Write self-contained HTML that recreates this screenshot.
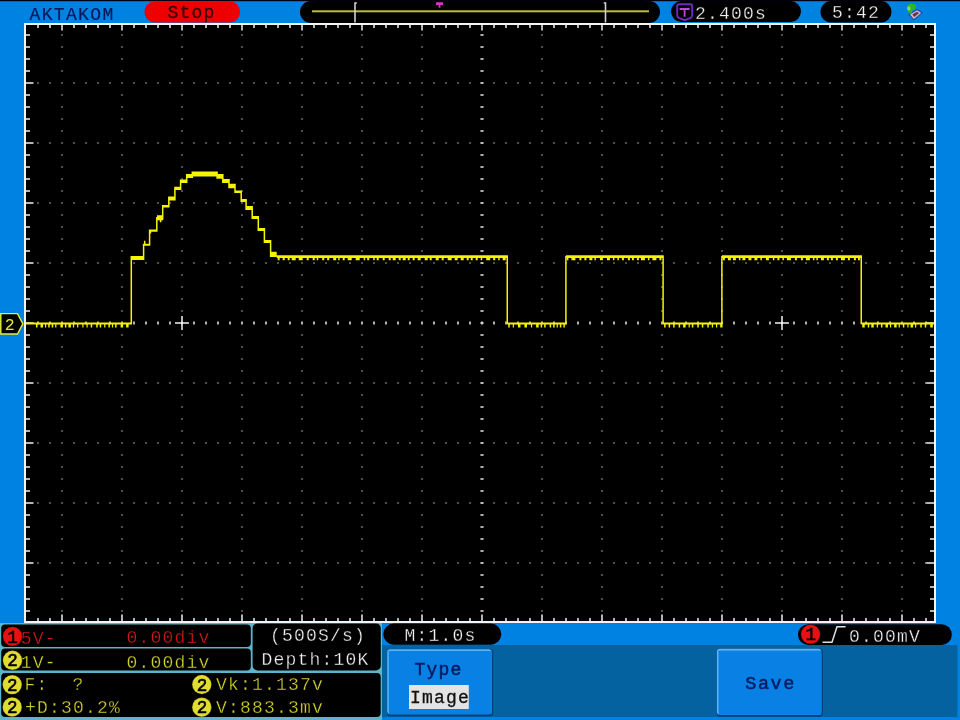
<!DOCTYPE html>
<html><head><meta charset="utf-8"><style>
html,body{margin:0;padding:0;background:#0082e2;width:960px;height:720px;overflow:hidden}
svg{display:block;filter:blur(0.35px)}
text{font-family:"Liberation Mono",monospace;}
</style></head><body>
<svg width="960" height="720" viewBox="0 0 960 720">
<rect x="0" y="0" width="960" height="720" fill="#0082e2"/>
<rect x="0" y="0" width="960" height="1.2" fill="#000010"/>

<text x="29.5" y="19.6" font-size="18" letter-spacing="1.35" fill="#061a5a" font-weight="normal" xml:space="preserve" stroke="#061a5a" stroke-width="0.2">AKTAKOM</text>
<rect x="144.5" y="1.2" width="95.5" height="21.3" rx="10.6" fill="#ee0000"/>
<text x="167.5" y="17.8" font-size="18" letter-spacing="1.20" fill="#300000" font-weight="normal" xml:space="preserve" stroke="#300000" stroke-width="0.3">Stop</text>
<rect x="300" y="1" width="360" height="22" rx="11" fill="#000"/>
<rect x="312" y="10.3" width="337" height="2" fill="#bcbc36"/>
<path d="M355 22.5V3h1.8" stroke="#cfcfd8" stroke-width="1.6" fill="none"/>
<path d="M605.5 22.5V3h-1.8" stroke="#cfcfd8" stroke-width="1.6" fill="none"/>
<path d="M436 2.3h7v2.6h-2.6v2.8h-1.8v-2.8h-2.6z" fill="#dd30d0"/>
<rect x="671" y="1.1" width="130" height="20.9" rx="10.4" fill="#000"/>
<path d="M677.2 6.2Q677.2 4.2 679.2 4.2H690.2Q692.2 4.2 692.2 6.2V15.5Q692.2 17 690.7 17.8L685.6 19.8Q684.7 20.2 683.8 19.8L678.7 17.8Q677.2 17 677.2 15.5Z" fill="none" stroke="#6e2ac4" stroke-width="1.9"/>
<path d="M679.6 8h10v2h-4.1v6.8h-1.8v-6.8h-4.1z" fill="#c043e2"/>
<text x="695" y="18.8" font-size="18" letter-spacing="1.20" fill="#f2f2f2" font-weight="normal" xml:space="preserve"  stroke="#000" stroke-width="0.3">2.400s</text>
<rect x="820.5" y="1.1" width="71" height="21.4" rx="10.6" fill="#000"/>
<text x="832" y="17.9" font-size="18" letter-spacing="1.20" fill="#f2f2f2" font-weight="normal" xml:space="preserve"  stroke="#000" stroke-width="0.3">5:42</text>
<path d="M908.4 14.6L917.2 9L922.8 12.8L913.6 20.4z" fill="#1c46aa"/>
<path d="M910 14.6L917.1 10.2L921.2 13L913.8 19z" fill="#dcb4c8"/>
<path d="M912.3 14.6L916.9 11.8L919 13.2L914.2 17z" fill="#5a3852"/>
<path d="M906.8 8C906.8 5 909 3.6 912 3.8C915 4 916.8 5.4 916.2 7.6C915.6 9.4 913.4 9.8 912 11L911.4 14L910 13.6C908 12 906.8 10 906.8 8z" fill="#2fb52a"/>
<ellipse cx="908.9" cy="8.4" rx="1.6" ry="2.2" fill="#78e068"/>
<rect x="24" y="23" width="912" height="600" fill="#f4f4f4"/>
<rect x="26" y="25" width="908" height="596" fill="#000"/>
<path d="M37.25 25h1.5v3h-1.5zM37.25 621h1.5v-3h-1.5zM49.25 25h1.5v3h-1.5zM49.25 621h1.5v-3h-1.5zM61.25 25h1.5v5.5h-1.5zM61.25 621h1.5v-6.5h-1.5zM73.25 25h1.5v3h-1.5zM73.25 621h1.5v-3h-1.5zM85.25 25h1.5v3h-1.5zM85.25 621h1.5v-3h-1.5zM97.25 25h1.5v3h-1.5zM97.25 621h1.5v-3h-1.5zM109.25 25h1.5v3h-1.5zM109.25 621h1.5v-3h-1.5zM121.25 25h1.5v5.5h-1.5zM121.25 621h1.5v-6.5h-1.5zM133.25 25h1.5v3h-1.5zM133.25 621h1.5v-3h-1.5zM145.25 25h1.5v3h-1.5zM145.25 621h1.5v-3h-1.5zM157.25 25h1.5v3h-1.5zM157.25 621h1.5v-3h-1.5zM169.25 25h1.5v3h-1.5zM169.25 621h1.5v-3h-1.5zM181.25 25h1.5v5.5h-1.5zM181.25 621h1.5v-6.5h-1.5zM193.25 25h1.5v3h-1.5zM193.25 621h1.5v-3h-1.5zM205.25 25h1.5v3h-1.5zM205.25 621h1.5v-3h-1.5zM217.25 25h1.5v3h-1.5zM217.25 621h1.5v-3h-1.5zM229.25 25h1.5v3h-1.5zM229.25 621h1.5v-3h-1.5zM241.25 25h1.5v5.5h-1.5zM241.25 621h1.5v-6.5h-1.5zM253.25 25h1.5v3h-1.5zM253.25 621h1.5v-3h-1.5zM265.25 25h1.5v3h-1.5zM265.25 621h1.5v-3h-1.5zM277.25 25h1.5v3h-1.5zM277.25 621h1.5v-3h-1.5zM289.25 25h1.5v3h-1.5zM289.25 621h1.5v-3h-1.5zM301.25 25h1.5v5.5h-1.5zM301.25 621h1.5v-6.5h-1.5zM313.25 25h1.5v3h-1.5zM313.25 621h1.5v-3h-1.5zM325.25 25h1.5v3h-1.5zM325.25 621h1.5v-3h-1.5zM337.25 25h1.5v3h-1.5zM337.25 621h1.5v-3h-1.5zM349.25 25h1.5v3h-1.5zM349.25 621h1.5v-3h-1.5zM361.25 25h1.5v5.5h-1.5zM361.25 621h1.5v-6.5h-1.5zM373.25 25h1.5v3h-1.5zM373.25 621h1.5v-3h-1.5zM385.25 25h1.5v3h-1.5zM385.25 621h1.5v-3h-1.5zM397.25 25h1.5v3h-1.5zM397.25 621h1.5v-3h-1.5zM409.25 25h1.5v3h-1.5zM409.25 621h1.5v-3h-1.5zM421.25 25h1.5v5.5h-1.5zM421.25 621h1.5v-6.5h-1.5zM433.25 25h1.5v3h-1.5zM433.25 621h1.5v-3h-1.5zM445.25 25h1.5v3h-1.5zM445.25 621h1.5v-3h-1.5zM457.25 25h1.5v3h-1.5zM457.25 621h1.5v-3h-1.5zM469.25 25h1.5v3h-1.5zM469.25 621h1.5v-3h-1.5zM481.25 25h1.5v5.5h-1.5zM481.25 621h1.5v-6.5h-1.5zM493.25 25h1.5v3h-1.5zM493.25 621h1.5v-3h-1.5zM505.25 25h1.5v3h-1.5zM505.25 621h1.5v-3h-1.5zM517.25 25h1.5v3h-1.5zM517.25 621h1.5v-3h-1.5zM529.25 25h1.5v3h-1.5zM529.25 621h1.5v-3h-1.5zM541.25 25h1.5v5.5h-1.5zM541.25 621h1.5v-6.5h-1.5zM553.25 25h1.5v3h-1.5zM553.25 621h1.5v-3h-1.5zM565.25 25h1.5v3h-1.5zM565.25 621h1.5v-3h-1.5zM577.25 25h1.5v3h-1.5zM577.25 621h1.5v-3h-1.5zM589.25 25h1.5v3h-1.5zM589.25 621h1.5v-3h-1.5zM601.25 25h1.5v5.5h-1.5zM601.25 621h1.5v-6.5h-1.5zM613.25 25h1.5v3h-1.5zM613.25 621h1.5v-3h-1.5zM625.25 25h1.5v3h-1.5zM625.25 621h1.5v-3h-1.5zM637.25 25h1.5v3h-1.5zM637.25 621h1.5v-3h-1.5zM649.25 25h1.5v3h-1.5zM649.25 621h1.5v-3h-1.5zM661.25 25h1.5v5.5h-1.5zM661.25 621h1.5v-6.5h-1.5zM673.25 25h1.5v3h-1.5zM673.25 621h1.5v-3h-1.5zM685.25 25h1.5v3h-1.5zM685.25 621h1.5v-3h-1.5zM697.25 25h1.5v3h-1.5zM697.25 621h1.5v-3h-1.5zM709.25 25h1.5v3h-1.5zM709.25 621h1.5v-3h-1.5zM721.25 25h1.5v5.5h-1.5zM721.25 621h1.5v-6.5h-1.5zM733.25 25h1.5v3h-1.5zM733.25 621h1.5v-3h-1.5zM745.25 25h1.5v3h-1.5zM745.25 621h1.5v-3h-1.5zM757.25 25h1.5v3h-1.5zM757.25 621h1.5v-3h-1.5zM769.25 25h1.5v3h-1.5zM769.25 621h1.5v-3h-1.5zM781.25 25h1.5v5.5h-1.5zM781.25 621h1.5v-6.5h-1.5zM793.25 25h1.5v3h-1.5zM793.25 621h1.5v-3h-1.5zM805.25 25h1.5v3h-1.5zM805.25 621h1.5v-3h-1.5zM817.25 25h1.5v3h-1.5zM817.25 621h1.5v-3h-1.5zM829.25 25h1.5v3h-1.5zM829.25 621h1.5v-3h-1.5zM841.25 25h1.5v5.5h-1.5zM841.25 621h1.5v-6.5h-1.5zM853.25 25h1.5v3h-1.5zM853.25 621h1.5v-3h-1.5zM865.25 25h1.5v3h-1.5zM865.25 621h1.5v-3h-1.5zM877.25 25h1.5v3h-1.5zM877.25 621h1.5v-3h-1.5zM889.25 25h1.5v3h-1.5zM889.25 621h1.5v-3h-1.5zM901.25 25h1.5v5.5h-1.5zM901.25 621h1.5v-6.5h-1.5zM913.25 25h1.5v3h-1.5zM913.25 621h1.5v-3h-1.5zM925.25 25h1.5v3h-1.5zM925.25 621h1.5v-3h-1.5zM26 34.25v1.5h4v-1.5zM934 34.25v1.5h-4v-1.5zM26 46.25v1.5h4v-1.5zM934 46.25v1.5h-4v-1.5zM26 58.25v1.5h4v-1.5zM934 58.25v1.5h-4v-1.5zM26 70.25v1.5h4v-1.5zM934 70.25v1.5h-4v-1.5zM26 82.25v1.5h7.5v-1.5zM934 82.25v1.5h-8.5v-1.5zM26 94.25v1.5h4v-1.5zM934 94.25v1.5h-4v-1.5zM26 106.25v1.5h4v-1.5zM934 106.25v1.5h-4v-1.5zM26 118.25v1.5h4v-1.5zM934 118.25v1.5h-4v-1.5zM26 130.25v1.5h4v-1.5zM934 130.25v1.5h-4v-1.5zM26 142.25v1.5h7.5v-1.5zM934 142.25v1.5h-8.5v-1.5zM26 154.25v1.5h4v-1.5zM934 154.25v1.5h-4v-1.5zM26 166.25v1.5h4v-1.5zM934 166.25v1.5h-4v-1.5zM26 178.25v1.5h4v-1.5zM934 178.25v1.5h-4v-1.5zM26 190.25v1.5h4v-1.5zM934 190.25v1.5h-4v-1.5zM26 202.25v1.5h7.5v-1.5zM934 202.25v1.5h-8.5v-1.5zM26 214.25v1.5h4v-1.5zM934 214.25v1.5h-4v-1.5zM26 226.25v1.5h4v-1.5zM934 226.25v1.5h-4v-1.5zM26 238.25v1.5h4v-1.5zM934 238.25v1.5h-4v-1.5zM26 250.25v1.5h4v-1.5zM934 250.25v1.5h-4v-1.5zM26 262.25v1.5h7.5v-1.5zM934 262.25v1.5h-8.5v-1.5zM26 274.25v1.5h4v-1.5zM934 274.25v1.5h-4v-1.5zM26 286.25v1.5h4v-1.5zM934 286.25v1.5h-4v-1.5zM26 298.25v1.5h4v-1.5zM934 298.25v1.5h-4v-1.5zM26 310.25v1.5h4v-1.5zM934 310.25v1.5h-4v-1.5zM26 322.25v1.5h7.5v-1.5zM934 322.25v1.5h-8.5v-1.5zM26 334.25v1.5h4v-1.5zM934 334.25v1.5h-4v-1.5zM26 346.25v1.5h4v-1.5zM934 346.25v1.5h-4v-1.5zM26 358.25v1.5h4v-1.5zM934 358.25v1.5h-4v-1.5zM26 370.25v1.5h4v-1.5zM934 370.25v1.5h-4v-1.5zM26 382.25v1.5h7.5v-1.5zM934 382.25v1.5h-8.5v-1.5zM26 394.25v1.5h4v-1.5zM934 394.25v1.5h-4v-1.5zM26 406.25v1.5h4v-1.5zM934 406.25v1.5h-4v-1.5zM26 418.25v1.5h4v-1.5zM934 418.25v1.5h-4v-1.5zM26 430.25v1.5h4v-1.5zM934 430.25v1.5h-4v-1.5zM26 442.25v1.5h7.5v-1.5zM934 442.25v1.5h-8.5v-1.5zM26 454.25v1.5h4v-1.5zM934 454.25v1.5h-4v-1.5zM26 466.25v1.5h4v-1.5zM934 466.25v1.5h-4v-1.5zM26 478.25v1.5h4v-1.5zM934 478.25v1.5h-4v-1.5zM26 490.25v1.5h4v-1.5zM934 490.25v1.5h-4v-1.5zM26 502.25v1.5h7.5v-1.5zM934 502.25v1.5h-8.5v-1.5zM26 514.25v1.5h4v-1.5zM934 514.25v1.5h-4v-1.5zM26 526.25v1.5h4v-1.5zM934 526.25v1.5h-4v-1.5zM26 538.25v1.5h4v-1.5zM934 538.25v1.5h-4v-1.5zM26 550.25v1.5h4v-1.5zM934 550.25v1.5h-4v-1.5zM26 562.25v1.5h7.5v-1.5zM934 562.25v1.5h-8.5v-1.5zM26 574.25v1.5h4v-1.5zM934 574.25v1.5h-4v-1.5zM26 586.25v1.5h4v-1.5zM934 586.25v1.5h-4v-1.5zM26 598.25v1.5h4v-1.5zM934 598.25v1.5h-4v-1.5zM26 610.25v1.5h4v-1.5zM934 610.25v1.5h-4v-1.5z" fill="#f0f0f0"/>
<path d="M61.25 34.25h1.5v1.5h-1.5zM61.25 46.25h1.5v1.5h-1.5zM61.25 58.25h1.5v1.5h-1.5zM61.25 70.25h1.5v1.5h-1.5zM61.25 94.25h1.5v1.5h-1.5zM61.25 106.25h1.5v1.5h-1.5zM61.25 118.25h1.5v1.5h-1.5zM61.25 130.25h1.5v1.5h-1.5zM61.25 154.25h1.5v1.5h-1.5zM61.25 166.25h1.5v1.5h-1.5zM61.25 178.25h1.5v1.5h-1.5zM61.25 190.25h1.5v1.5h-1.5zM61.25 214.25h1.5v1.5h-1.5zM61.25 226.25h1.5v1.5h-1.5zM61.25 238.25h1.5v1.5h-1.5zM61.25 250.25h1.5v1.5h-1.5zM61.25 274.25h1.5v1.5h-1.5zM61.25 286.25h1.5v1.5h-1.5zM61.25 298.25h1.5v1.5h-1.5zM61.25 310.25h1.5v1.5h-1.5zM61.25 334.25h1.5v1.5h-1.5zM61.25 346.25h1.5v1.5h-1.5zM61.25 358.25h1.5v1.5h-1.5zM61.25 370.25h1.5v1.5h-1.5zM61.25 394.25h1.5v1.5h-1.5zM61.25 406.25h1.5v1.5h-1.5zM61.25 418.25h1.5v1.5h-1.5zM61.25 430.25h1.5v1.5h-1.5zM61.25 454.25h1.5v1.5h-1.5zM61.25 466.25h1.5v1.5h-1.5zM61.25 478.25h1.5v1.5h-1.5zM61.25 490.25h1.5v1.5h-1.5zM61.25 514.25h1.5v1.5h-1.5zM61.25 526.25h1.5v1.5h-1.5zM61.25 538.25h1.5v1.5h-1.5zM61.25 550.25h1.5v1.5h-1.5zM61.25 574.25h1.5v1.5h-1.5zM61.25 586.25h1.5v1.5h-1.5zM61.25 598.25h1.5v1.5h-1.5zM61.25 610.25h1.5v1.5h-1.5zM121.25 34.25h1.5v1.5h-1.5zM121.25 46.25h1.5v1.5h-1.5zM121.25 58.25h1.5v1.5h-1.5zM121.25 70.25h1.5v1.5h-1.5zM121.25 94.25h1.5v1.5h-1.5zM121.25 106.25h1.5v1.5h-1.5zM121.25 118.25h1.5v1.5h-1.5zM121.25 130.25h1.5v1.5h-1.5zM121.25 154.25h1.5v1.5h-1.5zM121.25 166.25h1.5v1.5h-1.5zM121.25 178.25h1.5v1.5h-1.5zM121.25 190.25h1.5v1.5h-1.5zM121.25 214.25h1.5v1.5h-1.5zM121.25 226.25h1.5v1.5h-1.5zM121.25 238.25h1.5v1.5h-1.5zM121.25 250.25h1.5v1.5h-1.5zM121.25 274.25h1.5v1.5h-1.5zM121.25 286.25h1.5v1.5h-1.5zM121.25 298.25h1.5v1.5h-1.5zM121.25 310.25h1.5v1.5h-1.5zM121.25 334.25h1.5v1.5h-1.5zM121.25 346.25h1.5v1.5h-1.5zM121.25 358.25h1.5v1.5h-1.5zM121.25 370.25h1.5v1.5h-1.5zM121.25 394.25h1.5v1.5h-1.5zM121.25 406.25h1.5v1.5h-1.5zM121.25 418.25h1.5v1.5h-1.5zM121.25 430.25h1.5v1.5h-1.5zM121.25 454.25h1.5v1.5h-1.5zM121.25 466.25h1.5v1.5h-1.5zM121.25 478.25h1.5v1.5h-1.5zM121.25 490.25h1.5v1.5h-1.5zM121.25 514.25h1.5v1.5h-1.5zM121.25 526.25h1.5v1.5h-1.5zM121.25 538.25h1.5v1.5h-1.5zM121.25 550.25h1.5v1.5h-1.5zM121.25 574.25h1.5v1.5h-1.5zM121.25 586.25h1.5v1.5h-1.5zM121.25 598.25h1.5v1.5h-1.5zM121.25 610.25h1.5v1.5h-1.5zM181.25 34.25h1.5v1.5h-1.5zM181.25 46.25h1.5v1.5h-1.5zM181.25 58.25h1.5v1.5h-1.5zM181.25 70.25h1.5v1.5h-1.5zM181.25 94.25h1.5v1.5h-1.5zM181.25 106.25h1.5v1.5h-1.5zM181.25 118.25h1.5v1.5h-1.5zM181.25 130.25h1.5v1.5h-1.5zM181.25 154.25h1.5v1.5h-1.5zM181.25 166.25h1.5v1.5h-1.5zM181.25 178.25h1.5v1.5h-1.5zM181.25 190.25h1.5v1.5h-1.5zM181.25 214.25h1.5v1.5h-1.5zM181.25 226.25h1.5v1.5h-1.5zM181.25 238.25h1.5v1.5h-1.5zM181.25 250.25h1.5v1.5h-1.5zM181.25 274.25h1.5v1.5h-1.5zM181.25 286.25h1.5v1.5h-1.5zM181.25 298.25h1.5v1.5h-1.5zM181.25 310.25h1.5v1.5h-1.5zM181.25 334.25h1.5v1.5h-1.5zM181.25 346.25h1.5v1.5h-1.5zM181.25 358.25h1.5v1.5h-1.5zM181.25 370.25h1.5v1.5h-1.5zM181.25 394.25h1.5v1.5h-1.5zM181.25 406.25h1.5v1.5h-1.5zM181.25 418.25h1.5v1.5h-1.5zM181.25 430.25h1.5v1.5h-1.5zM181.25 454.25h1.5v1.5h-1.5zM181.25 466.25h1.5v1.5h-1.5zM181.25 478.25h1.5v1.5h-1.5zM181.25 490.25h1.5v1.5h-1.5zM181.25 514.25h1.5v1.5h-1.5zM181.25 526.25h1.5v1.5h-1.5zM181.25 538.25h1.5v1.5h-1.5zM181.25 550.25h1.5v1.5h-1.5zM181.25 574.25h1.5v1.5h-1.5zM181.25 586.25h1.5v1.5h-1.5zM181.25 598.25h1.5v1.5h-1.5zM181.25 610.25h1.5v1.5h-1.5zM241.25 34.25h1.5v1.5h-1.5zM241.25 46.25h1.5v1.5h-1.5zM241.25 58.25h1.5v1.5h-1.5zM241.25 70.25h1.5v1.5h-1.5zM241.25 94.25h1.5v1.5h-1.5zM241.25 106.25h1.5v1.5h-1.5zM241.25 118.25h1.5v1.5h-1.5zM241.25 130.25h1.5v1.5h-1.5zM241.25 154.25h1.5v1.5h-1.5zM241.25 166.25h1.5v1.5h-1.5zM241.25 178.25h1.5v1.5h-1.5zM241.25 190.25h1.5v1.5h-1.5zM241.25 214.25h1.5v1.5h-1.5zM241.25 226.25h1.5v1.5h-1.5zM241.25 238.25h1.5v1.5h-1.5zM241.25 250.25h1.5v1.5h-1.5zM241.25 274.25h1.5v1.5h-1.5zM241.25 286.25h1.5v1.5h-1.5zM241.25 298.25h1.5v1.5h-1.5zM241.25 310.25h1.5v1.5h-1.5zM241.25 334.25h1.5v1.5h-1.5zM241.25 346.25h1.5v1.5h-1.5zM241.25 358.25h1.5v1.5h-1.5zM241.25 370.25h1.5v1.5h-1.5zM241.25 394.25h1.5v1.5h-1.5zM241.25 406.25h1.5v1.5h-1.5zM241.25 418.25h1.5v1.5h-1.5zM241.25 430.25h1.5v1.5h-1.5zM241.25 454.25h1.5v1.5h-1.5zM241.25 466.25h1.5v1.5h-1.5zM241.25 478.25h1.5v1.5h-1.5zM241.25 490.25h1.5v1.5h-1.5zM241.25 514.25h1.5v1.5h-1.5zM241.25 526.25h1.5v1.5h-1.5zM241.25 538.25h1.5v1.5h-1.5zM241.25 550.25h1.5v1.5h-1.5zM241.25 574.25h1.5v1.5h-1.5zM241.25 586.25h1.5v1.5h-1.5zM241.25 598.25h1.5v1.5h-1.5zM241.25 610.25h1.5v1.5h-1.5zM301.25 34.25h1.5v1.5h-1.5zM301.25 46.25h1.5v1.5h-1.5zM301.25 58.25h1.5v1.5h-1.5zM301.25 70.25h1.5v1.5h-1.5zM301.25 94.25h1.5v1.5h-1.5zM301.25 106.25h1.5v1.5h-1.5zM301.25 118.25h1.5v1.5h-1.5zM301.25 130.25h1.5v1.5h-1.5zM301.25 154.25h1.5v1.5h-1.5zM301.25 166.25h1.5v1.5h-1.5zM301.25 178.25h1.5v1.5h-1.5zM301.25 190.25h1.5v1.5h-1.5zM301.25 214.25h1.5v1.5h-1.5zM301.25 226.25h1.5v1.5h-1.5zM301.25 238.25h1.5v1.5h-1.5zM301.25 250.25h1.5v1.5h-1.5zM301.25 274.25h1.5v1.5h-1.5zM301.25 286.25h1.5v1.5h-1.5zM301.25 298.25h1.5v1.5h-1.5zM301.25 310.25h1.5v1.5h-1.5zM301.25 334.25h1.5v1.5h-1.5zM301.25 346.25h1.5v1.5h-1.5zM301.25 358.25h1.5v1.5h-1.5zM301.25 370.25h1.5v1.5h-1.5zM301.25 394.25h1.5v1.5h-1.5zM301.25 406.25h1.5v1.5h-1.5zM301.25 418.25h1.5v1.5h-1.5zM301.25 430.25h1.5v1.5h-1.5zM301.25 454.25h1.5v1.5h-1.5zM301.25 466.25h1.5v1.5h-1.5zM301.25 478.25h1.5v1.5h-1.5zM301.25 490.25h1.5v1.5h-1.5zM301.25 514.25h1.5v1.5h-1.5zM301.25 526.25h1.5v1.5h-1.5zM301.25 538.25h1.5v1.5h-1.5zM301.25 550.25h1.5v1.5h-1.5zM301.25 574.25h1.5v1.5h-1.5zM301.25 586.25h1.5v1.5h-1.5zM301.25 598.25h1.5v1.5h-1.5zM301.25 610.25h1.5v1.5h-1.5zM361.25 34.25h1.5v1.5h-1.5zM361.25 46.25h1.5v1.5h-1.5zM361.25 58.25h1.5v1.5h-1.5zM361.25 70.25h1.5v1.5h-1.5zM361.25 94.25h1.5v1.5h-1.5zM361.25 106.25h1.5v1.5h-1.5zM361.25 118.25h1.5v1.5h-1.5zM361.25 130.25h1.5v1.5h-1.5zM361.25 154.25h1.5v1.5h-1.5zM361.25 166.25h1.5v1.5h-1.5zM361.25 178.25h1.5v1.5h-1.5zM361.25 190.25h1.5v1.5h-1.5zM361.25 214.25h1.5v1.5h-1.5zM361.25 226.25h1.5v1.5h-1.5zM361.25 238.25h1.5v1.5h-1.5zM361.25 250.25h1.5v1.5h-1.5zM361.25 274.25h1.5v1.5h-1.5zM361.25 286.25h1.5v1.5h-1.5zM361.25 298.25h1.5v1.5h-1.5zM361.25 310.25h1.5v1.5h-1.5zM361.25 334.25h1.5v1.5h-1.5zM361.25 346.25h1.5v1.5h-1.5zM361.25 358.25h1.5v1.5h-1.5zM361.25 370.25h1.5v1.5h-1.5zM361.25 394.25h1.5v1.5h-1.5zM361.25 406.25h1.5v1.5h-1.5zM361.25 418.25h1.5v1.5h-1.5zM361.25 430.25h1.5v1.5h-1.5zM361.25 454.25h1.5v1.5h-1.5zM361.25 466.25h1.5v1.5h-1.5zM361.25 478.25h1.5v1.5h-1.5zM361.25 490.25h1.5v1.5h-1.5zM361.25 514.25h1.5v1.5h-1.5zM361.25 526.25h1.5v1.5h-1.5zM361.25 538.25h1.5v1.5h-1.5zM361.25 550.25h1.5v1.5h-1.5zM361.25 574.25h1.5v1.5h-1.5zM361.25 586.25h1.5v1.5h-1.5zM361.25 598.25h1.5v1.5h-1.5zM361.25 610.25h1.5v1.5h-1.5zM421.25 34.25h1.5v1.5h-1.5zM421.25 46.25h1.5v1.5h-1.5zM421.25 58.25h1.5v1.5h-1.5zM421.25 70.25h1.5v1.5h-1.5zM421.25 94.25h1.5v1.5h-1.5zM421.25 106.25h1.5v1.5h-1.5zM421.25 118.25h1.5v1.5h-1.5zM421.25 130.25h1.5v1.5h-1.5zM421.25 154.25h1.5v1.5h-1.5zM421.25 166.25h1.5v1.5h-1.5zM421.25 178.25h1.5v1.5h-1.5zM421.25 190.25h1.5v1.5h-1.5zM421.25 214.25h1.5v1.5h-1.5zM421.25 226.25h1.5v1.5h-1.5zM421.25 238.25h1.5v1.5h-1.5zM421.25 250.25h1.5v1.5h-1.5zM421.25 274.25h1.5v1.5h-1.5zM421.25 286.25h1.5v1.5h-1.5zM421.25 298.25h1.5v1.5h-1.5zM421.25 310.25h1.5v1.5h-1.5zM421.25 334.25h1.5v1.5h-1.5zM421.25 346.25h1.5v1.5h-1.5zM421.25 358.25h1.5v1.5h-1.5zM421.25 370.25h1.5v1.5h-1.5zM421.25 394.25h1.5v1.5h-1.5zM421.25 406.25h1.5v1.5h-1.5zM421.25 418.25h1.5v1.5h-1.5zM421.25 430.25h1.5v1.5h-1.5zM421.25 454.25h1.5v1.5h-1.5zM421.25 466.25h1.5v1.5h-1.5zM421.25 478.25h1.5v1.5h-1.5zM421.25 490.25h1.5v1.5h-1.5zM421.25 514.25h1.5v1.5h-1.5zM421.25 526.25h1.5v1.5h-1.5zM421.25 538.25h1.5v1.5h-1.5zM421.25 550.25h1.5v1.5h-1.5zM421.25 574.25h1.5v1.5h-1.5zM421.25 586.25h1.5v1.5h-1.5zM421.25 598.25h1.5v1.5h-1.5zM421.25 610.25h1.5v1.5h-1.5zM541.25 34.25h1.5v1.5h-1.5zM541.25 46.25h1.5v1.5h-1.5zM541.25 58.25h1.5v1.5h-1.5zM541.25 70.25h1.5v1.5h-1.5zM541.25 94.25h1.5v1.5h-1.5zM541.25 106.25h1.5v1.5h-1.5zM541.25 118.25h1.5v1.5h-1.5zM541.25 130.25h1.5v1.5h-1.5zM541.25 154.25h1.5v1.5h-1.5zM541.25 166.25h1.5v1.5h-1.5zM541.25 178.25h1.5v1.5h-1.5zM541.25 190.25h1.5v1.5h-1.5zM541.25 214.25h1.5v1.5h-1.5zM541.25 226.25h1.5v1.5h-1.5zM541.25 238.25h1.5v1.5h-1.5zM541.25 250.25h1.5v1.5h-1.5zM541.25 274.25h1.5v1.5h-1.5zM541.25 286.25h1.5v1.5h-1.5zM541.25 298.25h1.5v1.5h-1.5zM541.25 310.25h1.5v1.5h-1.5zM541.25 334.25h1.5v1.5h-1.5zM541.25 346.25h1.5v1.5h-1.5zM541.25 358.25h1.5v1.5h-1.5zM541.25 370.25h1.5v1.5h-1.5zM541.25 394.25h1.5v1.5h-1.5zM541.25 406.25h1.5v1.5h-1.5zM541.25 418.25h1.5v1.5h-1.5zM541.25 430.25h1.5v1.5h-1.5zM541.25 454.25h1.5v1.5h-1.5zM541.25 466.25h1.5v1.5h-1.5zM541.25 478.25h1.5v1.5h-1.5zM541.25 490.25h1.5v1.5h-1.5zM541.25 514.25h1.5v1.5h-1.5zM541.25 526.25h1.5v1.5h-1.5zM541.25 538.25h1.5v1.5h-1.5zM541.25 550.25h1.5v1.5h-1.5zM541.25 574.25h1.5v1.5h-1.5zM541.25 586.25h1.5v1.5h-1.5zM541.25 598.25h1.5v1.5h-1.5zM541.25 610.25h1.5v1.5h-1.5zM601.25 34.25h1.5v1.5h-1.5zM601.25 46.25h1.5v1.5h-1.5zM601.25 58.25h1.5v1.5h-1.5zM601.25 70.25h1.5v1.5h-1.5zM601.25 94.25h1.5v1.5h-1.5zM601.25 106.25h1.5v1.5h-1.5zM601.25 118.25h1.5v1.5h-1.5zM601.25 130.25h1.5v1.5h-1.5zM601.25 154.25h1.5v1.5h-1.5zM601.25 166.25h1.5v1.5h-1.5zM601.25 178.25h1.5v1.5h-1.5zM601.25 190.25h1.5v1.5h-1.5zM601.25 214.25h1.5v1.5h-1.5zM601.25 226.25h1.5v1.5h-1.5zM601.25 238.25h1.5v1.5h-1.5zM601.25 250.25h1.5v1.5h-1.5zM601.25 274.25h1.5v1.5h-1.5zM601.25 286.25h1.5v1.5h-1.5zM601.25 298.25h1.5v1.5h-1.5zM601.25 310.25h1.5v1.5h-1.5zM601.25 334.25h1.5v1.5h-1.5zM601.25 346.25h1.5v1.5h-1.5zM601.25 358.25h1.5v1.5h-1.5zM601.25 370.25h1.5v1.5h-1.5zM601.25 394.25h1.5v1.5h-1.5zM601.25 406.25h1.5v1.5h-1.5zM601.25 418.25h1.5v1.5h-1.5zM601.25 430.25h1.5v1.5h-1.5zM601.25 454.25h1.5v1.5h-1.5zM601.25 466.25h1.5v1.5h-1.5zM601.25 478.25h1.5v1.5h-1.5zM601.25 490.25h1.5v1.5h-1.5zM601.25 514.25h1.5v1.5h-1.5zM601.25 526.25h1.5v1.5h-1.5zM601.25 538.25h1.5v1.5h-1.5zM601.25 550.25h1.5v1.5h-1.5zM601.25 574.25h1.5v1.5h-1.5zM601.25 586.25h1.5v1.5h-1.5zM601.25 598.25h1.5v1.5h-1.5zM601.25 610.25h1.5v1.5h-1.5zM661.25 34.25h1.5v1.5h-1.5zM661.25 46.25h1.5v1.5h-1.5zM661.25 58.25h1.5v1.5h-1.5zM661.25 70.25h1.5v1.5h-1.5zM661.25 94.25h1.5v1.5h-1.5zM661.25 106.25h1.5v1.5h-1.5zM661.25 118.25h1.5v1.5h-1.5zM661.25 130.25h1.5v1.5h-1.5zM661.25 154.25h1.5v1.5h-1.5zM661.25 166.25h1.5v1.5h-1.5zM661.25 178.25h1.5v1.5h-1.5zM661.25 190.25h1.5v1.5h-1.5zM661.25 214.25h1.5v1.5h-1.5zM661.25 226.25h1.5v1.5h-1.5zM661.25 238.25h1.5v1.5h-1.5zM661.25 250.25h1.5v1.5h-1.5zM661.25 274.25h1.5v1.5h-1.5zM661.25 286.25h1.5v1.5h-1.5zM661.25 298.25h1.5v1.5h-1.5zM661.25 310.25h1.5v1.5h-1.5zM661.25 334.25h1.5v1.5h-1.5zM661.25 346.25h1.5v1.5h-1.5zM661.25 358.25h1.5v1.5h-1.5zM661.25 370.25h1.5v1.5h-1.5zM661.25 394.25h1.5v1.5h-1.5zM661.25 406.25h1.5v1.5h-1.5zM661.25 418.25h1.5v1.5h-1.5zM661.25 430.25h1.5v1.5h-1.5zM661.25 454.25h1.5v1.5h-1.5zM661.25 466.25h1.5v1.5h-1.5zM661.25 478.25h1.5v1.5h-1.5zM661.25 490.25h1.5v1.5h-1.5zM661.25 514.25h1.5v1.5h-1.5zM661.25 526.25h1.5v1.5h-1.5zM661.25 538.25h1.5v1.5h-1.5zM661.25 550.25h1.5v1.5h-1.5zM661.25 574.25h1.5v1.5h-1.5zM661.25 586.25h1.5v1.5h-1.5zM661.25 598.25h1.5v1.5h-1.5zM661.25 610.25h1.5v1.5h-1.5zM721.25 34.25h1.5v1.5h-1.5zM721.25 46.25h1.5v1.5h-1.5zM721.25 58.25h1.5v1.5h-1.5zM721.25 70.25h1.5v1.5h-1.5zM721.25 94.25h1.5v1.5h-1.5zM721.25 106.25h1.5v1.5h-1.5zM721.25 118.25h1.5v1.5h-1.5zM721.25 130.25h1.5v1.5h-1.5zM721.25 154.25h1.5v1.5h-1.5zM721.25 166.25h1.5v1.5h-1.5zM721.25 178.25h1.5v1.5h-1.5zM721.25 190.25h1.5v1.5h-1.5zM721.25 214.25h1.5v1.5h-1.5zM721.25 226.25h1.5v1.5h-1.5zM721.25 238.25h1.5v1.5h-1.5zM721.25 250.25h1.5v1.5h-1.5zM721.25 274.25h1.5v1.5h-1.5zM721.25 286.25h1.5v1.5h-1.5zM721.25 298.25h1.5v1.5h-1.5zM721.25 310.25h1.5v1.5h-1.5zM721.25 334.25h1.5v1.5h-1.5zM721.25 346.25h1.5v1.5h-1.5zM721.25 358.25h1.5v1.5h-1.5zM721.25 370.25h1.5v1.5h-1.5zM721.25 394.25h1.5v1.5h-1.5zM721.25 406.25h1.5v1.5h-1.5zM721.25 418.25h1.5v1.5h-1.5zM721.25 430.25h1.5v1.5h-1.5zM721.25 454.25h1.5v1.5h-1.5zM721.25 466.25h1.5v1.5h-1.5zM721.25 478.25h1.5v1.5h-1.5zM721.25 490.25h1.5v1.5h-1.5zM721.25 514.25h1.5v1.5h-1.5zM721.25 526.25h1.5v1.5h-1.5zM721.25 538.25h1.5v1.5h-1.5zM721.25 550.25h1.5v1.5h-1.5zM721.25 574.25h1.5v1.5h-1.5zM721.25 586.25h1.5v1.5h-1.5zM721.25 598.25h1.5v1.5h-1.5zM721.25 610.25h1.5v1.5h-1.5zM781.25 34.25h1.5v1.5h-1.5zM781.25 46.25h1.5v1.5h-1.5zM781.25 58.25h1.5v1.5h-1.5zM781.25 70.25h1.5v1.5h-1.5zM781.25 94.25h1.5v1.5h-1.5zM781.25 106.25h1.5v1.5h-1.5zM781.25 118.25h1.5v1.5h-1.5zM781.25 130.25h1.5v1.5h-1.5zM781.25 154.25h1.5v1.5h-1.5zM781.25 166.25h1.5v1.5h-1.5zM781.25 178.25h1.5v1.5h-1.5zM781.25 190.25h1.5v1.5h-1.5zM781.25 214.25h1.5v1.5h-1.5zM781.25 226.25h1.5v1.5h-1.5zM781.25 238.25h1.5v1.5h-1.5zM781.25 250.25h1.5v1.5h-1.5zM781.25 274.25h1.5v1.5h-1.5zM781.25 286.25h1.5v1.5h-1.5zM781.25 298.25h1.5v1.5h-1.5zM781.25 310.25h1.5v1.5h-1.5zM781.25 334.25h1.5v1.5h-1.5zM781.25 346.25h1.5v1.5h-1.5zM781.25 358.25h1.5v1.5h-1.5zM781.25 370.25h1.5v1.5h-1.5zM781.25 394.25h1.5v1.5h-1.5zM781.25 406.25h1.5v1.5h-1.5zM781.25 418.25h1.5v1.5h-1.5zM781.25 430.25h1.5v1.5h-1.5zM781.25 454.25h1.5v1.5h-1.5zM781.25 466.25h1.5v1.5h-1.5zM781.25 478.25h1.5v1.5h-1.5zM781.25 490.25h1.5v1.5h-1.5zM781.25 514.25h1.5v1.5h-1.5zM781.25 526.25h1.5v1.5h-1.5zM781.25 538.25h1.5v1.5h-1.5zM781.25 550.25h1.5v1.5h-1.5zM781.25 574.25h1.5v1.5h-1.5zM781.25 586.25h1.5v1.5h-1.5zM781.25 598.25h1.5v1.5h-1.5zM781.25 610.25h1.5v1.5h-1.5zM841.25 34.25h1.5v1.5h-1.5zM841.25 46.25h1.5v1.5h-1.5zM841.25 58.25h1.5v1.5h-1.5zM841.25 70.25h1.5v1.5h-1.5zM841.25 94.25h1.5v1.5h-1.5zM841.25 106.25h1.5v1.5h-1.5zM841.25 118.25h1.5v1.5h-1.5zM841.25 130.25h1.5v1.5h-1.5zM841.25 154.25h1.5v1.5h-1.5zM841.25 166.25h1.5v1.5h-1.5zM841.25 178.25h1.5v1.5h-1.5zM841.25 190.25h1.5v1.5h-1.5zM841.25 214.25h1.5v1.5h-1.5zM841.25 226.25h1.5v1.5h-1.5zM841.25 238.25h1.5v1.5h-1.5zM841.25 250.25h1.5v1.5h-1.5zM841.25 274.25h1.5v1.5h-1.5zM841.25 286.25h1.5v1.5h-1.5zM841.25 298.25h1.5v1.5h-1.5zM841.25 310.25h1.5v1.5h-1.5zM841.25 334.25h1.5v1.5h-1.5zM841.25 346.25h1.5v1.5h-1.5zM841.25 358.25h1.5v1.5h-1.5zM841.25 370.25h1.5v1.5h-1.5zM841.25 394.25h1.5v1.5h-1.5zM841.25 406.25h1.5v1.5h-1.5zM841.25 418.25h1.5v1.5h-1.5zM841.25 430.25h1.5v1.5h-1.5zM841.25 454.25h1.5v1.5h-1.5zM841.25 466.25h1.5v1.5h-1.5zM841.25 478.25h1.5v1.5h-1.5zM841.25 490.25h1.5v1.5h-1.5zM841.25 514.25h1.5v1.5h-1.5zM841.25 526.25h1.5v1.5h-1.5zM841.25 538.25h1.5v1.5h-1.5zM841.25 550.25h1.5v1.5h-1.5zM841.25 574.25h1.5v1.5h-1.5zM841.25 586.25h1.5v1.5h-1.5zM841.25 598.25h1.5v1.5h-1.5zM841.25 610.25h1.5v1.5h-1.5zM901.25 34.25h1.5v1.5h-1.5zM901.25 46.25h1.5v1.5h-1.5zM901.25 58.25h1.5v1.5h-1.5zM901.25 70.25h1.5v1.5h-1.5zM901.25 94.25h1.5v1.5h-1.5zM901.25 106.25h1.5v1.5h-1.5zM901.25 118.25h1.5v1.5h-1.5zM901.25 130.25h1.5v1.5h-1.5zM901.25 154.25h1.5v1.5h-1.5zM901.25 166.25h1.5v1.5h-1.5zM901.25 178.25h1.5v1.5h-1.5zM901.25 190.25h1.5v1.5h-1.5zM901.25 214.25h1.5v1.5h-1.5zM901.25 226.25h1.5v1.5h-1.5zM901.25 238.25h1.5v1.5h-1.5zM901.25 250.25h1.5v1.5h-1.5zM901.25 274.25h1.5v1.5h-1.5zM901.25 286.25h1.5v1.5h-1.5zM901.25 298.25h1.5v1.5h-1.5zM901.25 310.25h1.5v1.5h-1.5zM901.25 334.25h1.5v1.5h-1.5zM901.25 346.25h1.5v1.5h-1.5zM901.25 358.25h1.5v1.5h-1.5zM901.25 370.25h1.5v1.5h-1.5zM901.25 394.25h1.5v1.5h-1.5zM901.25 406.25h1.5v1.5h-1.5zM901.25 418.25h1.5v1.5h-1.5zM901.25 430.25h1.5v1.5h-1.5zM901.25 454.25h1.5v1.5h-1.5zM901.25 466.25h1.5v1.5h-1.5zM901.25 478.25h1.5v1.5h-1.5zM901.25 490.25h1.5v1.5h-1.5zM901.25 514.25h1.5v1.5h-1.5zM901.25 526.25h1.5v1.5h-1.5zM901.25 538.25h1.5v1.5h-1.5zM901.25 550.25h1.5v1.5h-1.5zM901.25 574.25h1.5v1.5h-1.5zM901.25 586.25h1.5v1.5h-1.5zM901.25 598.25h1.5v1.5h-1.5zM901.25 610.25h1.5v1.5h-1.5zM37.25 82.25h1.5v1.5h-1.5zM49.25 82.25h1.5v1.5h-1.5zM61.25 82.25h1.5v1.5h-1.5zM73.25 82.25h1.5v1.5h-1.5zM85.25 82.25h1.5v1.5h-1.5zM97.25 82.25h1.5v1.5h-1.5zM109.25 82.25h1.5v1.5h-1.5zM121.25 82.25h1.5v1.5h-1.5zM133.25 82.25h1.5v1.5h-1.5zM145.25 82.25h1.5v1.5h-1.5zM157.25 82.25h1.5v1.5h-1.5zM169.25 82.25h1.5v1.5h-1.5zM181.25 82.25h1.5v1.5h-1.5zM193.25 82.25h1.5v1.5h-1.5zM205.25 82.25h1.5v1.5h-1.5zM217.25 82.25h1.5v1.5h-1.5zM229.25 82.25h1.5v1.5h-1.5zM241.25 82.25h1.5v1.5h-1.5zM253.25 82.25h1.5v1.5h-1.5zM265.25 82.25h1.5v1.5h-1.5zM277.25 82.25h1.5v1.5h-1.5zM289.25 82.25h1.5v1.5h-1.5zM301.25 82.25h1.5v1.5h-1.5zM313.25 82.25h1.5v1.5h-1.5zM325.25 82.25h1.5v1.5h-1.5zM337.25 82.25h1.5v1.5h-1.5zM349.25 82.25h1.5v1.5h-1.5zM361.25 82.25h1.5v1.5h-1.5zM373.25 82.25h1.5v1.5h-1.5zM385.25 82.25h1.5v1.5h-1.5zM397.25 82.25h1.5v1.5h-1.5zM409.25 82.25h1.5v1.5h-1.5zM421.25 82.25h1.5v1.5h-1.5zM433.25 82.25h1.5v1.5h-1.5zM445.25 82.25h1.5v1.5h-1.5zM457.25 82.25h1.5v1.5h-1.5zM469.25 82.25h1.5v1.5h-1.5zM481.25 82.25h1.5v1.5h-1.5zM493.25 82.25h1.5v1.5h-1.5zM505.25 82.25h1.5v1.5h-1.5zM517.25 82.25h1.5v1.5h-1.5zM529.25 82.25h1.5v1.5h-1.5zM541.25 82.25h1.5v1.5h-1.5zM553.25 82.25h1.5v1.5h-1.5zM565.25 82.25h1.5v1.5h-1.5zM577.25 82.25h1.5v1.5h-1.5zM589.25 82.25h1.5v1.5h-1.5zM601.25 82.25h1.5v1.5h-1.5zM613.25 82.25h1.5v1.5h-1.5zM625.25 82.25h1.5v1.5h-1.5zM637.25 82.25h1.5v1.5h-1.5zM649.25 82.25h1.5v1.5h-1.5zM661.25 82.25h1.5v1.5h-1.5zM673.25 82.25h1.5v1.5h-1.5zM685.25 82.25h1.5v1.5h-1.5zM697.25 82.25h1.5v1.5h-1.5zM709.25 82.25h1.5v1.5h-1.5zM721.25 82.25h1.5v1.5h-1.5zM733.25 82.25h1.5v1.5h-1.5zM745.25 82.25h1.5v1.5h-1.5zM757.25 82.25h1.5v1.5h-1.5zM769.25 82.25h1.5v1.5h-1.5zM781.25 82.25h1.5v1.5h-1.5zM793.25 82.25h1.5v1.5h-1.5zM805.25 82.25h1.5v1.5h-1.5zM817.25 82.25h1.5v1.5h-1.5zM829.25 82.25h1.5v1.5h-1.5zM841.25 82.25h1.5v1.5h-1.5zM853.25 82.25h1.5v1.5h-1.5zM865.25 82.25h1.5v1.5h-1.5zM877.25 82.25h1.5v1.5h-1.5zM889.25 82.25h1.5v1.5h-1.5zM901.25 82.25h1.5v1.5h-1.5zM913.25 82.25h1.5v1.5h-1.5zM925.25 82.25h1.5v1.5h-1.5zM37.25 142.25h1.5v1.5h-1.5zM49.25 142.25h1.5v1.5h-1.5zM61.25 142.25h1.5v1.5h-1.5zM73.25 142.25h1.5v1.5h-1.5zM85.25 142.25h1.5v1.5h-1.5zM97.25 142.25h1.5v1.5h-1.5zM109.25 142.25h1.5v1.5h-1.5zM121.25 142.25h1.5v1.5h-1.5zM133.25 142.25h1.5v1.5h-1.5zM145.25 142.25h1.5v1.5h-1.5zM157.25 142.25h1.5v1.5h-1.5zM169.25 142.25h1.5v1.5h-1.5zM181.25 142.25h1.5v1.5h-1.5zM193.25 142.25h1.5v1.5h-1.5zM205.25 142.25h1.5v1.5h-1.5zM217.25 142.25h1.5v1.5h-1.5zM229.25 142.25h1.5v1.5h-1.5zM241.25 142.25h1.5v1.5h-1.5zM253.25 142.25h1.5v1.5h-1.5zM265.25 142.25h1.5v1.5h-1.5zM277.25 142.25h1.5v1.5h-1.5zM289.25 142.25h1.5v1.5h-1.5zM301.25 142.25h1.5v1.5h-1.5zM313.25 142.25h1.5v1.5h-1.5zM325.25 142.25h1.5v1.5h-1.5zM337.25 142.25h1.5v1.5h-1.5zM349.25 142.25h1.5v1.5h-1.5zM361.25 142.25h1.5v1.5h-1.5zM373.25 142.25h1.5v1.5h-1.5zM385.25 142.25h1.5v1.5h-1.5zM397.25 142.25h1.5v1.5h-1.5zM409.25 142.25h1.5v1.5h-1.5zM421.25 142.25h1.5v1.5h-1.5zM433.25 142.25h1.5v1.5h-1.5zM445.25 142.25h1.5v1.5h-1.5zM457.25 142.25h1.5v1.5h-1.5zM469.25 142.25h1.5v1.5h-1.5zM481.25 142.25h1.5v1.5h-1.5zM493.25 142.25h1.5v1.5h-1.5zM505.25 142.25h1.5v1.5h-1.5zM517.25 142.25h1.5v1.5h-1.5zM529.25 142.25h1.5v1.5h-1.5zM541.25 142.25h1.5v1.5h-1.5zM553.25 142.25h1.5v1.5h-1.5zM565.25 142.25h1.5v1.5h-1.5zM577.25 142.25h1.5v1.5h-1.5zM589.25 142.25h1.5v1.5h-1.5zM601.25 142.25h1.5v1.5h-1.5zM613.25 142.25h1.5v1.5h-1.5zM625.25 142.25h1.5v1.5h-1.5zM637.25 142.25h1.5v1.5h-1.5zM649.25 142.25h1.5v1.5h-1.5zM661.25 142.25h1.5v1.5h-1.5zM673.25 142.25h1.5v1.5h-1.5zM685.25 142.25h1.5v1.5h-1.5zM697.25 142.25h1.5v1.5h-1.5zM709.25 142.25h1.5v1.5h-1.5zM721.25 142.25h1.5v1.5h-1.5zM733.25 142.25h1.5v1.5h-1.5zM745.25 142.25h1.5v1.5h-1.5zM757.25 142.25h1.5v1.5h-1.5zM769.25 142.25h1.5v1.5h-1.5zM781.25 142.25h1.5v1.5h-1.5zM793.25 142.25h1.5v1.5h-1.5zM805.25 142.25h1.5v1.5h-1.5zM817.25 142.25h1.5v1.5h-1.5zM829.25 142.25h1.5v1.5h-1.5zM841.25 142.25h1.5v1.5h-1.5zM853.25 142.25h1.5v1.5h-1.5zM865.25 142.25h1.5v1.5h-1.5zM877.25 142.25h1.5v1.5h-1.5zM889.25 142.25h1.5v1.5h-1.5zM901.25 142.25h1.5v1.5h-1.5zM913.25 142.25h1.5v1.5h-1.5zM925.25 142.25h1.5v1.5h-1.5zM37.25 202.25h1.5v1.5h-1.5zM49.25 202.25h1.5v1.5h-1.5zM61.25 202.25h1.5v1.5h-1.5zM73.25 202.25h1.5v1.5h-1.5zM85.25 202.25h1.5v1.5h-1.5zM97.25 202.25h1.5v1.5h-1.5zM109.25 202.25h1.5v1.5h-1.5zM121.25 202.25h1.5v1.5h-1.5zM133.25 202.25h1.5v1.5h-1.5zM145.25 202.25h1.5v1.5h-1.5zM157.25 202.25h1.5v1.5h-1.5zM169.25 202.25h1.5v1.5h-1.5zM181.25 202.25h1.5v1.5h-1.5zM193.25 202.25h1.5v1.5h-1.5zM205.25 202.25h1.5v1.5h-1.5zM217.25 202.25h1.5v1.5h-1.5zM229.25 202.25h1.5v1.5h-1.5zM241.25 202.25h1.5v1.5h-1.5zM253.25 202.25h1.5v1.5h-1.5zM265.25 202.25h1.5v1.5h-1.5zM277.25 202.25h1.5v1.5h-1.5zM289.25 202.25h1.5v1.5h-1.5zM301.25 202.25h1.5v1.5h-1.5zM313.25 202.25h1.5v1.5h-1.5zM325.25 202.25h1.5v1.5h-1.5zM337.25 202.25h1.5v1.5h-1.5zM349.25 202.25h1.5v1.5h-1.5zM361.25 202.25h1.5v1.5h-1.5zM373.25 202.25h1.5v1.5h-1.5zM385.25 202.25h1.5v1.5h-1.5zM397.25 202.25h1.5v1.5h-1.5zM409.25 202.25h1.5v1.5h-1.5zM421.25 202.25h1.5v1.5h-1.5zM433.25 202.25h1.5v1.5h-1.5zM445.25 202.25h1.5v1.5h-1.5zM457.25 202.25h1.5v1.5h-1.5zM469.25 202.25h1.5v1.5h-1.5zM481.25 202.25h1.5v1.5h-1.5zM493.25 202.25h1.5v1.5h-1.5zM505.25 202.25h1.5v1.5h-1.5zM517.25 202.25h1.5v1.5h-1.5zM529.25 202.25h1.5v1.5h-1.5zM541.25 202.25h1.5v1.5h-1.5zM553.25 202.25h1.5v1.5h-1.5zM565.25 202.25h1.5v1.5h-1.5zM577.25 202.25h1.5v1.5h-1.5zM589.25 202.25h1.5v1.5h-1.5zM601.25 202.25h1.5v1.5h-1.5zM613.25 202.25h1.5v1.5h-1.5zM625.25 202.25h1.5v1.5h-1.5zM637.25 202.25h1.5v1.5h-1.5zM649.25 202.25h1.5v1.5h-1.5zM661.25 202.25h1.5v1.5h-1.5zM673.25 202.25h1.5v1.5h-1.5zM685.25 202.25h1.5v1.5h-1.5zM697.25 202.25h1.5v1.5h-1.5zM709.25 202.25h1.5v1.5h-1.5zM721.25 202.25h1.5v1.5h-1.5zM733.25 202.25h1.5v1.5h-1.5zM745.25 202.25h1.5v1.5h-1.5zM757.25 202.25h1.5v1.5h-1.5zM769.25 202.25h1.5v1.5h-1.5zM781.25 202.25h1.5v1.5h-1.5zM793.25 202.25h1.5v1.5h-1.5zM805.25 202.25h1.5v1.5h-1.5zM817.25 202.25h1.5v1.5h-1.5zM829.25 202.25h1.5v1.5h-1.5zM841.25 202.25h1.5v1.5h-1.5zM853.25 202.25h1.5v1.5h-1.5zM865.25 202.25h1.5v1.5h-1.5zM877.25 202.25h1.5v1.5h-1.5zM889.25 202.25h1.5v1.5h-1.5zM901.25 202.25h1.5v1.5h-1.5zM913.25 202.25h1.5v1.5h-1.5zM925.25 202.25h1.5v1.5h-1.5zM37.25 262.25h1.5v1.5h-1.5zM49.25 262.25h1.5v1.5h-1.5zM61.25 262.25h1.5v1.5h-1.5zM73.25 262.25h1.5v1.5h-1.5zM85.25 262.25h1.5v1.5h-1.5zM97.25 262.25h1.5v1.5h-1.5zM109.25 262.25h1.5v1.5h-1.5zM121.25 262.25h1.5v1.5h-1.5zM133.25 262.25h1.5v1.5h-1.5zM145.25 262.25h1.5v1.5h-1.5zM157.25 262.25h1.5v1.5h-1.5zM169.25 262.25h1.5v1.5h-1.5zM181.25 262.25h1.5v1.5h-1.5zM193.25 262.25h1.5v1.5h-1.5zM205.25 262.25h1.5v1.5h-1.5zM217.25 262.25h1.5v1.5h-1.5zM229.25 262.25h1.5v1.5h-1.5zM241.25 262.25h1.5v1.5h-1.5zM253.25 262.25h1.5v1.5h-1.5zM265.25 262.25h1.5v1.5h-1.5zM277.25 262.25h1.5v1.5h-1.5zM289.25 262.25h1.5v1.5h-1.5zM301.25 262.25h1.5v1.5h-1.5zM313.25 262.25h1.5v1.5h-1.5zM325.25 262.25h1.5v1.5h-1.5zM337.25 262.25h1.5v1.5h-1.5zM349.25 262.25h1.5v1.5h-1.5zM361.25 262.25h1.5v1.5h-1.5zM373.25 262.25h1.5v1.5h-1.5zM385.25 262.25h1.5v1.5h-1.5zM397.25 262.25h1.5v1.5h-1.5zM409.25 262.25h1.5v1.5h-1.5zM421.25 262.25h1.5v1.5h-1.5zM433.25 262.25h1.5v1.5h-1.5zM445.25 262.25h1.5v1.5h-1.5zM457.25 262.25h1.5v1.5h-1.5zM469.25 262.25h1.5v1.5h-1.5zM481.25 262.25h1.5v1.5h-1.5zM493.25 262.25h1.5v1.5h-1.5zM505.25 262.25h1.5v1.5h-1.5zM517.25 262.25h1.5v1.5h-1.5zM529.25 262.25h1.5v1.5h-1.5zM541.25 262.25h1.5v1.5h-1.5zM553.25 262.25h1.5v1.5h-1.5zM565.25 262.25h1.5v1.5h-1.5zM577.25 262.25h1.5v1.5h-1.5zM589.25 262.25h1.5v1.5h-1.5zM601.25 262.25h1.5v1.5h-1.5zM613.25 262.25h1.5v1.5h-1.5zM625.25 262.25h1.5v1.5h-1.5zM637.25 262.25h1.5v1.5h-1.5zM649.25 262.25h1.5v1.5h-1.5zM661.25 262.25h1.5v1.5h-1.5zM673.25 262.25h1.5v1.5h-1.5zM685.25 262.25h1.5v1.5h-1.5zM697.25 262.25h1.5v1.5h-1.5zM709.25 262.25h1.5v1.5h-1.5zM721.25 262.25h1.5v1.5h-1.5zM733.25 262.25h1.5v1.5h-1.5zM745.25 262.25h1.5v1.5h-1.5zM757.25 262.25h1.5v1.5h-1.5zM769.25 262.25h1.5v1.5h-1.5zM781.25 262.25h1.5v1.5h-1.5zM793.25 262.25h1.5v1.5h-1.5zM805.25 262.25h1.5v1.5h-1.5zM817.25 262.25h1.5v1.5h-1.5zM829.25 262.25h1.5v1.5h-1.5zM841.25 262.25h1.5v1.5h-1.5zM853.25 262.25h1.5v1.5h-1.5zM865.25 262.25h1.5v1.5h-1.5zM877.25 262.25h1.5v1.5h-1.5zM889.25 262.25h1.5v1.5h-1.5zM901.25 262.25h1.5v1.5h-1.5zM913.25 262.25h1.5v1.5h-1.5zM925.25 262.25h1.5v1.5h-1.5zM37.25 382.25h1.5v1.5h-1.5zM49.25 382.25h1.5v1.5h-1.5zM61.25 382.25h1.5v1.5h-1.5zM73.25 382.25h1.5v1.5h-1.5zM85.25 382.25h1.5v1.5h-1.5zM97.25 382.25h1.5v1.5h-1.5zM109.25 382.25h1.5v1.5h-1.5zM121.25 382.25h1.5v1.5h-1.5zM133.25 382.25h1.5v1.5h-1.5zM145.25 382.25h1.5v1.5h-1.5zM157.25 382.25h1.5v1.5h-1.5zM169.25 382.25h1.5v1.5h-1.5zM181.25 382.25h1.5v1.5h-1.5zM193.25 382.25h1.5v1.5h-1.5zM205.25 382.25h1.5v1.5h-1.5zM217.25 382.25h1.5v1.5h-1.5zM229.25 382.25h1.5v1.5h-1.5zM241.25 382.25h1.5v1.5h-1.5zM253.25 382.25h1.5v1.5h-1.5zM265.25 382.25h1.5v1.5h-1.5zM277.25 382.25h1.5v1.5h-1.5zM289.25 382.25h1.5v1.5h-1.5zM301.25 382.25h1.5v1.5h-1.5zM313.25 382.25h1.5v1.5h-1.5zM325.25 382.25h1.5v1.5h-1.5zM337.25 382.25h1.5v1.5h-1.5zM349.25 382.25h1.5v1.5h-1.5zM361.25 382.25h1.5v1.5h-1.5zM373.25 382.25h1.5v1.5h-1.5zM385.25 382.25h1.5v1.5h-1.5zM397.25 382.25h1.5v1.5h-1.5zM409.25 382.25h1.5v1.5h-1.5zM421.25 382.25h1.5v1.5h-1.5zM433.25 382.25h1.5v1.5h-1.5zM445.25 382.25h1.5v1.5h-1.5zM457.25 382.25h1.5v1.5h-1.5zM469.25 382.25h1.5v1.5h-1.5zM481.25 382.25h1.5v1.5h-1.5zM493.25 382.25h1.5v1.5h-1.5zM505.25 382.25h1.5v1.5h-1.5zM517.25 382.25h1.5v1.5h-1.5zM529.25 382.25h1.5v1.5h-1.5zM541.25 382.25h1.5v1.5h-1.5zM553.25 382.25h1.5v1.5h-1.5zM565.25 382.25h1.5v1.5h-1.5zM577.25 382.25h1.5v1.5h-1.5zM589.25 382.25h1.5v1.5h-1.5zM601.25 382.25h1.5v1.5h-1.5zM613.25 382.25h1.5v1.5h-1.5zM625.25 382.25h1.5v1.5h-1.5zM637.25 382.25h1.5v1.5h-1.5zM649.25 382.25h1.5v1.5h-1.5zM661.25 382.25h1.5v1.5h-1.5zM673.25 382.25h1.5v1.5h-1.5zM685.25 382.25h1.5v1.5h-1.5zM697.25 382.25h1.5v1.5h-1.5zM709.25 382.25h1.5v1.5h-1.5zM721.25 382.25h1.5v1.5h-1.5zM733.25 382.25h1.5v1.5h-1.5zM745.25 382.25h1.5v1.5h-1.5zM757.25 382.25h1.5v1.5h-1.5zM769.25 382.25h1.5v1.5h-1.5zM781.25 382.25h1.5v1.5h-1.5zM793.25 382.25h1.5v1.5h-1.5zM805.25 382.25h1.5v1.5h-1.5zM817.25 382.25h1.5v1.5h-1.5zM829.25 382.25h1.5v1.5h-1.5zM841.25 382.25h1.5v1.5h-1.5zM853.25 382.25h1.5v1.5h-1.5zM865.25 382.25h1.5v1.5h-1.5zM877.25 382.25h1.5v1.5h-1.5zM889.25 382.25h1.5v1.5h-1.5zM901.25 382.25h1.5v1.5h-1.5zM913.25 382.25h1.5v1.5h-1.5zM925.25 382.25h1.5v1.5h-1.5zM37.25 442.25h1.5v1.5h-1.5zM49.25 442.25h1.5v1.5h-1.5zM61.25 442.25h1.5v1.5h-1.5zM73.25 442.25h1.5v1.5h-1.5zM85.25 442.25h1.5v1.5h-1.5zM97.25 442.25h1.5v1.5h-1.5zM109.25 442.25h1.5v1.5h-1.5zM121.25 442.25h1.5v1.5h-1.5zM133.25 442.25h1.5v1.5h-1.5zM145.25 442.25h1.5v1.5h-1.5zM157.25 442.25h1.5v1.5h-1.5zM169.25 442.25h1.5v1.5h-1.5zM181.25 442.25h1.5v1.5h-1.5zM193.25 442.25h1.5v1.5h-1.5zM205.25 442.25h1.5v1.5h-1.5zM217.25 442.25h1.5v1.5h-1.5zM229.25 442.25h1.5v1.5h-1.5zM241.25 442.25h1.5v1.5h-1.5zM253.25 442.25h1.5v1.5h-1.5zM265.25 442.25h1.5v1.5h-1.5zM277.25 442.25h1.5v1.5h-1.5zM289.25 442.25h1.5v1.5h-1.5zM301.25 442.25h1.5v1.5h-1.5zM313.25 442.25h1.5v1.5h-1.5zM325.25 442.25h1.5v1.5h-1.5zM337.25 442.25h1.5v1.5h-1.5zM349.25 442.25h1.5v1.5h-1.5zM361.25 442.25h1.5v1.5h-1.5zM373.25 442.25h1.5v1.5h-1.5zM385.25 442.25h1.5v1.5h-1.5zM397.25 442.25h1.5v1.5h-1.5zM409.25 442.25h1.5v1.5h-1.5zM421.25 442.25h1.5v1.5h-1.5zM433.25 442.25h1.5v1.5h-1.5zM445.25 442.25h1.5v1.5h-1.5zM457.25 442.25h1.5v1.5h-1.5zM469.25 442.25h1.5v1.5h-1.5zM481.25 442.25h1.5v1.5h-1.5zM493.25 442.25h1.5v1.5h-1.5zM505.25 442.25h1.5v1.5h-1.5zM517.25 442.25h1.5v1.5h-1.5zM529.25 442.25h1.5v1.5h-1.5zM541.25 442.25h1.5v1.5h-1.5zM553.25 442.25h1.5v1.5h-1.5zM565.25 442.25h1.5v1.5h-1.5zM577.25 442.25h1.5v1.5h-1.5zM589.25 442.25h1.5v1.5h-1.5zM601.25 442.25h1.5v1.5h-1.5zM613.25 442.25h1.5v1.5h-1.5zM625.25 442.25h1.5v1.5h-1.5zM637.25 442.25h1.5v1.5h-1.5zM649.25 442.25h1.5v1.5h-1.5zM661.25 442.25h1.5v1.5h-1.5zM673.25 442.25h1.5v1.5h-1.5zM685.25 442.25h1.5v1.5h-1.5zM697.25 442.25h1.5v1.5h-1.5zM709.25 442.25h1.5v1.5h-1.5zM721.25 442.25h1.5v1.5h-1.5zM733.25 442.25h1.5v1.5h-1.5zM745.25 442.25h1.5v1.5h-1.5zM757.25 442.25h1.5v1.5h-1.5zM769.25 442.25h1.5v1.5h-1.5zM781.25 442.25h1.5v1.5h-1.5zM793.25 442.25h1.5v1.5h-1.5zM805.25 442.25h1.5v1.5h-1.5zM817.25 442.25h1.5v1.5h-1.5zM829.25 442.25h1.5v1.5h-1.5zM841.25 442.25h1.5v1.5h-1.5zM853.25 442.25h1.5v1.5h-1.5zM865.25 442.25h1.5v1.5h-1.5zM877.25 442.25h1.5v1.5h-1.5zM889.25 442.25h1.5v1.5h-1.5zM901.25 442.25h1.5v1.5h-1.5zM913.25 442.25h1.5v1.5h-1.5zM925.25 442.25h1.5v1.5h-1.5zM37.25 502.25h1.5v1.5h-1.5zM49.25 502.25h1.5v1.5h-1.5zM61.25 502.25h1.5v1.5h-1.5zM73.25 502.25h1.5v1.5h-1.5zM85.25 502.25h1.5v1.5h-1.5zM97.25 502.25h1.5v1.5h-1.5zM109.25 502.25h1.5v1.5h-1.5zM121.25 502.25h1.5v1.5h-1.5zM133.25 502.25h1.5v1.5h-1.5zM145.25 502.25h1.5v1.5h-1.5zM157.25 502.25h1.5v1.5h-1.5zM169.25 502.25h1.5v1.5h-1.5zM181.25 502.25h1.5v1.5h-1.5zM193.25 502.25h1.5v1.5h-1.5zM205.25 502.25h1.5v1.5h-1.5zM217.25 502.25h1.5v1.5h-1.5zM229.25 502.25h1.5v1.5h-1.5zM241.25 502.25h1.5v1.5h-1.5zM253.25 502.25h1.5v1.5h-1.5zM265.25 502.25h1.5v1.5h-1.5zM277.25 502.25h1.5v1.5h-1.5zM289.25 502.25h1.5v1.5h-1.5zM301.25 502.25h1.5v1.5h-1.5zM313.25 502.25h1.5v1.5h-1.5zM325.25 502.25h1.5v1.5h-1.5zM337.25 502.25h1.5v1.5h-1.5zM349.25 502.25h1.5v1.5h-1.5zM361.25 502.25h1.5v1.5h-1.5zM373.25 502.25h1.5v1.5h-1.5zM385.25 502.25h1.5v1.5h-1.5zM397.25 502.25h1.5v1.5h-1.5zM409.25 502.25h1.5v1.5h-1.5zM421.25 502.25h1.5v1.5h-1.5zM433.25 502.25h1.5v1.5h-1.5zM445.25 502.25h1.5v1.5h-1.5zM457.25 502.25h1.5v1.5h-1.5zM469.25 502.25h1.5v1.5h-1.5zM481.25 502.25h1.5v1.5h-1.5zM493.25 502.25h1.5v1.5h-1.5zM505.25 502.25h1.5v1.5h-1.5zM517.25 502.25h1.5v1.5h-1.5zM529.25 502.25h1.5v1.5h-1.5zM541.25 502.25h1.5v1.5h-1.5zM553.25 502.25h1.5v1.5h-1.5zM565.25 502.25h1.5v1.5h-1.5zM577.25 502.25h1.5v1.5h-1.5zM589.25 502.25h1.5v1.5h-1.5zM601.25 502.25h1.5v1.5h-1.5zM613.25 502.25h1.5v1.5h-1.5zM625.25 502.25h1.5v1.5h-1.5zM637.25 502.25h1.5v1.5h-1.5zM649.25 502.25h1.5v1.5h-1.5zM661.25 502.25h1.5v1.5h-1.5zM673.25 502.25h1.5v1.5h-1.5zM685.25 502.25h1.5v1.5h-1.5zM697.25 502.25h1.5v1.5h-1.5zM709.25 502.25h1.5v1.5h-1.5zM721.25 502.25h1.5v1.5h-1.5zM733.25 502.25h1.5v1.5h-1.5zM745.25 502.25h1.5v1.5h-1.5zM757.25 502.25h1.5v1.5h-1.5zM769.25 502.25h1.5v1.5h-1.5zM781.25 502.25h1.5v1.5h-1.5zM793.25 502.25h1.5v1.5h-1.5zM805.25 502.25h1.5v1.5h-1.5zM817.25 502.25h1.5v1.5h-1.5zM829.25 502.25h1.5v1.5h-1.5zM841.25 502.25h1.5v1.5h-1.5zM853.25 502.25h1.5v1.5h-1.5zM865.25 502.25h1.5v1.5h-1.5zM877.25 502.25h1.5v1.5h-1.5zM889.25 502.25h1.5v1.5h-1.5zM901.25 502.25h1.5v1.5h-1.5zM913.25 502.25h1.5v1.5h-1.5zM925.25 502.25h1.5v1.5h-1.5zM37.25 562.25h1.5v1.5h-1.5zM49.25 562.25h1.5v1.5h-1.5zM61.25 562.25h1.5v1.5h-1.5zM73.25 562.25h1.5v1.5h-1.5zM85.25 562.25h1.5v1.5h-1.5zM97.25 562.25h1.5v1.5h-1.5zM109.25 562.25h1.5v1.5h-1.5zM121.25 562.25h1.5v1.5h-1.5zM133.25 562.25h1.5v1.5h-1.5zM145.25 562.25h1.5v1.5h-1.5zM157.25 562.25h1.5v1.5h-1.5zM169.25 562.25h1.5v1.5h-1.5zM181.25 562.25h1.5v1.5h-1.5zM193.25 562.25h1.5v1.5h-1.5zM205.25 562.25h1.5v1.5h-1.5zM217.25 562.25h1.5v1.5h-1.5zM229.25 562.25h1.5v1.5h-1.5zM241.25 562.25h1.5v1.5h-1.5zM253.25 562.25h1.5v1.5h-1.5zM265.25 562.25h1.5v1.5h-1.5zM277.25 562.25h1.5v1.5h-1.5zM289.25 562.25h1.5v1.5h-1.5zM301.25 562.25h1.5v1.5h-1.5zM313.25 562.25h1.5v1.5h-1.5zM325.25 562.25h1.5v1.5h-1.5zM337.25 562.25h1.5v1.5h-1.5zM349.25 562.25h1.5v1.5h-1.5zM361.25 562.25h1.5v1.5h-1.5zM373.25 562.25h1.5v1.5h-1.5zM385.25 562.25h1.5v1.5h-1.5zM397.25 562.25h1.5v1.5h-1.5zM409.25 562.25h1.5v1.5h-1.5zM421.25 562.25h1.5v1.5h-1.5zM433.25 562.25h1.5v1.5h-1.5zM445.25 562.25h1.5v1.5h-1.5zM457.25 562.25h1.5v1.5h-1.5zM469.25 562.25h1.5v1.5h-1.5zM481.25 562.25h1.5v1.5h-1.5zM493.25 562.25h1.5v1.5h-1.5zM505.25 562.25h1.5v1.5h-1.5zM517.25 562.25h1.5v1.5h-1.5zM529.25 562.25h1.5v1.5h-1.5zM541.25 562.25h1.5v1.5h-1.5zM553.25 562.25h1.5v1.5h-1.5zM565.25 562.25h1.5v1.5h-1.5zM577.25 562.25h1.5v1.5h-1.5zM589.25 562.25h1.5v1.5h-1.5zM601.25 562.25h1.5v1.5h-1.5zM613.25 562.25h1.5v1.5h-1.5zM625.25 562.25h1.5v1.5h-1.5zM637.25 562.25h1.5v1.5h-1.5zM649.25 562.25h1.5v1.5h-1.5zM661.25 562.25h1.5v1.5h-1.5zM673.25 562.25h1.5v1.5h-1.5zM685.25 562.25h1.5v1.5h-1.5zM697.25 562.25h1.5v1.5h-1.5zM709.25 562.25h1.5v1.5h-1.5zM721.25 562.25h1.5v1.5h-1.5zM733.25 562.25h1.5v1.5h-1.5zM745.25 562.25h1.5v1.5h-1.5zM757.25 562.25h1.5v1.5h-1.5zM769.25 562.25h1.5v1.5h-1.5zM781.25 562.25h1.5v1.5h-1.5zM793.25 562.25h1.5v1.5h-1.5zM805.25 562.25h1.5v1.5h-1.5zM817.25 562.25h1.5v1.5h-1.5zM829.25 562.25h1.5v1.5h-1.5zM841.25 562.25h1.5v1.5h-1.5zM853.25 562.25h1.5v1.5h-1.5zM865.25 562.25h1.5v1.5h-1.5zM877.25 562.25h1.5v1.5h-1.5zM889.25 562.25h1.5v1.5h-1.5zM901.25 562.25h1.5v1.5h-1.5zM913.25 562.25h1.5v1.5h-1.5zM925.25 562.25h1.5v1.5h-1.5z" fill="#8e8e8e"/>
<path d="M480.4 34.2h3.2v1.6h-3.2zM480.4 46.2h3.2v1.6h-3.2zM480.4 58.2h3.2v1.6h-3.2zM480.4 70.2h3.2v1.6h-3.2zM480.4 82.2h3.2v1.6h-3.2zM480.4 94.2h3.2v1.6h-3.2zM480.4 106.2h3.2v1.6h-3.2zM480.4 118.2h3.2v1.6h-3.2zM480.4 130.2h3.2v1.6h-3.2zM480.4 142.2h3.2v1.6h-3.2zM480.4 154.2h3.2v1.6h-3.2zM480.4 166.2h3.2v1.6h-3.2zM480.4 178.2h3.2v1.6h-3.2zM480.4 190.2h3.2v1.6h-3.2zM480.4 202.2h3.2v1.6h-3.2zM480.4 214.2h3.2v1.6h-3.2zM480.4 226.2h3.2v1.6h-3.2zM480.4 238.2h3.2v1.6h-3.2zM480.4 250.2h3.2v1.6h-3.2zM480.4 262.2h3.2v1.6h-3.2zM480.4 274.2h3.2v1.6h-3.2zM480.4 286.2h3.2v1.6h-3.2zM480.4 298.2h3.2v1.6h-3.2zM480.4 310.2h3.2v1.6h-3.2zM480.4 322.2h3.2v1.6h-3.2zM480.4 334.2h3.2v1.6h-3.2zM480.4 346.2h3.2v1.6h-3.2zM480.4 358.2h3.2v1.6h-3.2zM480.4 370.2h3.2v1.6h-3.2zM480.4 382.2h3.2v1.6h-3.2zM480.4 394.2h3.2v1.6h-3.2zM480.4 406.2h3.2v1.6h-3.2zM480.4 418.2h3.2v1.6h-3.2zM480.4 430.2h3.2v1.6h-3.2zM480.4 442.2h3.2v1.6h-3.2zM480.4 454.2h3.2v1.6h-3.2zM480.4 466.2h3.2v1.6h-3.2zM480.4 478.2h3.2v1.6h-3.2zM480.4 490.2h3.2v1.6h-3.2zM480.4 502.2h3.2v1.6h-3.2zM480.4 514.2h3.2v1.6h-3.2zM480.4 526.2h3.2v1.6h-3.2zM480.4 538.2h3.2v1.6h-3.2zM480.4 550.2h3.2v1.6h-3.2zM480.4 562.2h3.2v1.6h-3.2zM480.4 574.2h3.2v1.6h-3.2zM480.4 586.2h3.2v1.6h-3.2zM480.4 598.2h3.2v1.6h-3.2zM480.4 610.2h3.2v1.6h-3.2zM37.2 321.4h1.6v3.2h-1.6zM49.2 321.4h1.6v3.2h-1.6zM61.2 321.4h1.6v3.2h-1.6zM73.2 321.4h1.6v3.2h-1.6zM85.2 321.4h1.6v3.2h-1.6zM97.2 321.4h1.6v3.2h-1.6zM109.2 321.4h1.6v3.2h-1.6zM121.2 321.4h1.6v3.2h-1.6zM133.2 321.4h1.6v3.2h-1.6zM145.2 321.4h1.6v3.2h-1.6zM157.2 321.4h1.6v3.2h-1.6zM169.2 321.4h1.6v3.2h-1.6zM181.2 321.4h1.6v3.2h-1.6zM193.2 321.4h1.6v3.2h-1.6zM205.2 321.4h1.6v3.2h-1.6zM217.2 321.4h1.6v3.2h-1.6zM229.2 321.4h1.6v3.2h-1.6zM241.2 321.4h1.6v3.2h-1.6zM253.2 321.4h1.6v3.2h-1.6zM265.2 321.4h1.6v3.2h-1.6zM277.2 321.4h1.6v3.2h-1.6zM289.2 321.4h1.6v3.2h-1.6zM301.2 321.4h1.6v3.2h-1.6zM313.2 321.4h1.6v3.2h-1.6zM325.2 321.4h1.6v3.2h-1.6zM337.2 321.4h1.6v3.2h-1.6zM349.2 321.4h1.6v3.2h-1.6zM361.2 321.4h1.6v3.2h-1.6zM373.2 321.4h1.6v3.2h-1.6zM385.2 321.4h1.6v3.2h-1.6zM397.2 321.4h1.6v3.2h-1.6zM409.2 321.4h1.6v3.2h-1.6zM421.2 321.4h1.6v3.2h-1.6zM433.2 321.4h1.6v3.2h-1.6zM445.2 321.4h1.6v3.2h-1.6zM457.2 321.4h1.6v3.2h-1.6zM469.2 321.4h1.6v3.2h-1.6zM481.2 321.4h1.6v3.2h-1.6zM493.2 321.4h1.6v3.2h-1.6zM505.2 321.4h1.6v3.2h-1.6zM517.2 321.4h1.6v3.2h-1.6zM529.2 321.4h1.6v3.2h-1.6zM541.2 321.4h1.6v3.2h-1.6zM553.2 321.4h1.6v3.2h-1.6zM565.2 321.4h1.6v3.2h-1.6zM577.2 321.4h1.6v3.2h-1.6zM589.2 321.4h1.6v3.2h-1.6zM601.2 321.4h1.6v3.2h-1.6zM613.2 321.4h1.6v3.2h-1.6zM625.2 321.4h1.6v3.2h-1.6zM637.2 321.4h1.6v3.2h-1.6zM649.2 321.4h1.6v3.2h-1.6zM661.2 321.4h1.6v3.2h-1.6zM673.2 321.4h1.6v3.2h-1.6zM685.2 321.4h1.6v3.2h-1.6zM697.2 321.4h1.6v3.2h-1.6zM709.2 321.4h1.6v3.2h-1.6zM721.2 321.4h1.6v3.2h-1.6zM733.2 321.4h1.6v3.2h-1.6zM745.2 321.4h1.6v3.2h-1.6zM757.2 321.4h1.6v3.2h-1.6zM769.2 321.4h1.6v3.2h-1.6zM781.2 321.4h1.6v3.2h-1.6zM793.2 321.4h1.6v3.2h-1.6zM805.2 321.4h1.6v3.2h-1.6zM817.2 321.4h1.6v3.2h-1.6zM829.2 321.4h1.6v3.2h-1.6zM841.2 321.4h1.6v3.2h-1.6zM853.2 321.4h1.6v3.2h-1.6zM865.2 321.4h1.6v3.2h-1.6zM877.2 321.4h1.6v3.2h-1.6zM889.2 321.4h1.6v3.2h-1.6zM901.2 321.4h1.6v3.2h-1.6zM913.2 321.4h1.6v3.2h-1.6zM925.2 321.4h1.6v3.2h-1.6z" fill="#e0e0e0"/>
<path d="M175 322.25h14v1.5h-14zM181.25 316h1.5v14h-1.5z" fill="#f4f4f4"/>
<path d="M775 322.25h14v1.5h-14zM781.25 316h1.5v14h-1.5z" fill="#f4f4f4"/>
<path d="M26.00 322.40H132.00V324.50H26.00zM36.00 324.50H37.50V327.50H36.00zM40.50 324.50H43.00V327.50H40.50zM45.00 324.50H46.20V327.50H45.00zM48.20 324.50H49.70V327.50H48.20zM51.70 324.50H53.20V327.50H51.70zM55.20 324.50H56.40V327.50H55.20zM60.40 324.50H62.90V327.50H60.40zM64.90 324.50H66.40V327.50H64.90zM68.40 324.50H70.90V327.50H68.40zM72.90 324.50H74.10V327.50H72.90zM77.10 324.50H78.30V327.50H77.10zM82.30 324.50H83.50V327.50H82.30zM86.50 324.50H87.70V327.50H86.50zM90.70 324.50H92.20V327.50H90.70zM96.20 324.50H97.70V327.50H96.20zM99.70 324.50H101.20V327.50H99.70zM104.20 324.50H105.40V327.50H104.20zM108.40 324.50H109.90V327.50H108.40zM111.90 324.50H113.10V327.50H111.90zM115.10 324.50H116.60V327.50H115.10zM120.60 324.50H123.10V327.50H120.60zM126.10 324.50H128.60V327.50H126.10zM130.55 256.00H132.05V324.00H130.55zM131.30 256.00H143.60V260.00H131.30zM143.60 243.80H149.60V245.80H143.60zM142.85 245.80H144.35V260.00H142.85zM142.85 243.80H144.35V260.00H142.85zM149.60 229.40H156.80V231.70H149.60zM148.85 231.70H150.35V245.80H148.85zM148.85 229.40H150.35V245.80H148.85zM156.80 217.00H162.70V219.50H156.80zM156.05 219.50H157.55V231.70H156.05zM156.05 217.00H157.55V231.70H156.05zM162.70 205.00H168.80V207.50H162.70zM161.95 207.50H163.45V219.50H161.95zM161.95 205.00H163.45V219.50H161.95zM168.80 196.60H174.90V200.50H168.80zM168.05 200.50H169.55V207.50H168.05zM168.05 196.60H169.55V207.50H168.05zM174.90 186.70H180.60V190.00H174.90zM174.15 190.00H175.65V200.50H174.15zM174.15 186.70H175.65V200.50H174.15zM180.60 179.50H186.70V183.00H180.60zM179.85 183.00H181.35V190.00H179.85zM179.85 179.50H181.35V190.00H179.85zM186.70 174.10H192.30V178.00H186.70zM185.95 178.00H187.45V183.00H185.95zM185.95 174.10H187.45V183.00H185.95zM192.30 171.50H217.10V176.40H192.30zM191.55 176.40H193.05V178.00H191.55zM191.55 171.50H193.05V178.00H191.55zM217.10 174.00H222.80V178.70H217.10zM216.35 171.50H217.85V174.00H216.35zM216.35 171.50H217.85V178.70H216.35zM222.80 179.00H229.00V183.00H222.80zM222.05 174.00H223.55V179.00H222.05zM222.05 174.00H223.55V183.00H222.05zM229.00 183.70H235.00V188.30H229.00zM228.25 179.00H229.75V183.70H228.25zM228.25 179.00H229.75V188.30H228.25zM235.00 190.60H241.20V192.90H235.00zM234.25 183.70H235.75V190.60H234.25zM234.25 183.70H235.75V192.90H234.25zM241.20 198.90H246.10V202.00H241.20zM240.45 190.60H241.95V198.90H240.45zM240.45 190.60H241.95V202.00H240.45zM246.10 206.00H252.20V210.00H246.10zM245.35 198.90H246.85V206.00H245.35zM245.35 198.90H246.85V210.00H245.35zM252.20 216.00H258.30V219.00H252.20zM251.45 206.00H252.95V216.00H251.45zM251.45 206.00H252.95V219.00H251.45zM258.30 228.00H264.40V231.00H258.30zM257.55 216.00H259.05V228.00H257.55zM257.55 216.00H259.05V231.00H257.55zM264.40 240.00H270.60V243.00H264.40zM263.65 228.00H265.15V240.00H263.65zM263.65 228.00H265.15V243.00H263.65zM270.60 251.70H276.70V257.00H270.60zM269.85 240.00H271.35V251.70H269.85zM269.85 240.00H271.35V257.00H269.85zM157.00 215.30H163.00V220.30H157.00zM159.80 220.00H161.40V222.20H159.80zM144.00 240.80H145.40V244.50H144.00zM149.80 231.50H151.20V233.60H149.80zM276.70 255.20H507.90V257.90H276.70zM277.70 257.90H279.70V260.30H277.70zM282.70 257.90H284.70V260.30H282.70zM287.70 257.90H289.70V260.30H287.70zM291.70 257.90H295.70V260.30H291.70zM298.70 257.90H302.70V260.30H298.70zM306.70 257.90H308.70V260.30H306.70zM312.70 257.90H314.70V260.30H312.70zM316.70 257.90H318.20V260.30H316.70zM322.20 257.90H324.20V260.30H322.20zM327.20 257.90H329.20V260.30H327.20zM333.20 257.90H336.20V260.30H333.20zM338.20 257.90H339.70V260.30H338.20zM342.70 257.90H344.70V260.30H342.70zM347.70 257.90H351.70V260.30H347.70zM355.70 257.90H359.70V260.30H355.70zM363.70 257.90H365.20V260.30H363.70zM367.20 257.90H369.20V260.30H367.20zM373.20 257.90H374.70V260.30H373.20zM376.70 257.90H378.70V260.30H376.70zM382.70 257.90H384.70V260.30H382.70zM388.70 257.90H390.70V260.30H388.70zM392.70 257.90H395.70V260.30H392.70zM398.70 257.90H400.70V260.30H398.70zM402.70 257.90H405.70V260.30H402.70zM407.70 257.90H409.70V260.30H407.70zM412.70 257.90H414.70V260.30H412.70zM417.70 257.90H420.70V260.30H417.70zM424.70 257.90H427.70V260.30H424.70zM429.70 257.90H431.70V260.30H429.70zM435.70 257.90H438.70V260.30H435.70zM441.70 257.90H443.70V260.30H441.70zM447.70 257.90H451.70V260.30H447.70zM454.70 257.90H457.70V260.30H454.70zM460.70 257.90H463.70V260.30H460.70zM466.70 257.90H468.70V260.30H466.70zM470.70 257.90H472.70V260.30H470.70zM475.70 257.90H477.70V260.30H475.70zM480.70 257.90H482.20V260.30H480.70zM486.20 257.90H490.20V260.30H486.20zM493.20 257.90H495.20V260.30H493.20zM498.20 257.90H499.70V260.30H498.20zM502.70 257.90H505.70V260.30H502.70zM506.50 256.00H508.00V324.00H506.50zM507.25 322.40H566.50V324.50H507.25zM508.25 324.50H509.75V327.50H508.25zM512.75 324.50H513.95V327.50H512.75zM517.95 324.50H520.45V327.50H517.95zM524.45 324.50H526.95V327.50H524.45zM530.95 324.50H532.15V327.50H530.95zM536.15 324.50H538.65V327.50H536.15zM540.65 324.50H542.15V327.50H540.65zM544.15 324.50H545.65V327.50H544.15zM549.65 324.50H551.15V327.50H549.65zM553.15 324.50H554.65V327.50H553.15zM556.65 324.50H557.85V327.50H556.65zM559.85 324.50H561.35V327.50H559.85zM563.35 324.50H564.85V327.50H563.35zM565.15 256.00H566.65V324.00H565.15zM565.90 255.20H663.70V257.90H565.90zM566.90 257.90H568.40V260.30H566.90zM571.40 257.90H575.40V260.30H571.40zM579.40 257.90H581.40V260.30H579.40zM584.40 257.90H586.40V260.30H584.40zM589.40 257.90H592.40V260.30H589.40zM594.40 257.90H595.90V260.30H594.40zM599.90 257.90H602.90V260.30H599.90zM606.90 257.90H609.90V260.30H606.90zM612.90 257.90H614.40V260.30H612.90zM617.40 257.90H618.90V260.30H617.40zM621.90 257.90H623.90V260.30H621.90zM627.90 257.90H629.90V260.30H627.90zM631.90 257.90H633.90V260.30H631.90zM636.90 257.90H638.90V260.30H636.90zM640.90 257.90H644.90V260.30H640.90zM647.90 257.90H649.40V260.30H647.90zM652.40 257.90H656.40V260.30H652.40zM659.40 257.90H661.40V260.30H659.40zM662.35 256.00H663.85V324.00H662.35zM663.10 322.40H722.50V324.50H663.10zM664.10 324.50H665.60V327.50H664.10zM668.60 324.50H670.10V327.50H668.60zM673.10 324.50H674.60V327.50H673.10zM678.60 324.50H680.10V327.50H678.60zM683.10 324.50H685.60V327.50H683.10zM688.60 324.50H689.80V327.50H688.60zM691.80 324.50H693.30V327.50H691.80zM697.30 324.50H698.80V327.50H697.30zM701.80 324.50H703.30V327.50H701.80zM707.30 324.50H708.80V327.50H707.30zM711.80 324.50H713.00V327.50H711.80zM716.00 324.50H717.20V327.50H716.00zM720.20 324.50H722.50V327.50H720.20zM721.15 256.00H722.65V324.00H721.15zM721.90 255.20H861.90V257.90H721.90zM722.90 257.90H724.90V260.30H722.90zM727.90 257.90H730.90V260.30H727.90zM732.90 257.90H735.90V260.30H732.90zM738.90 257.90H740.40V260.30H738.90zM742.40 257.90H745.40V260.30H742.40zM748.40 257.90H751.40V260.30H748.40zM754.40 257.90H757.40V260.30H754.40zM760.40 257.90H761.90V260.30H760.40zM765.90 257.90H768.90V260.30H765.90zM772.90 257.90H774.40V260.30H772.90zM777.40 257.90H779.40V260.30H777.40zM782.40 257.90H783.90V260.30H782.40zM786.90 257.90H790.90V260.30H786.90zM794.90 257.90H796.90V260.30H794.90zM800.90 257.90H802.90V260.30H800.90zM805.90 257.90H809.90V260.30H805.90zM812.90 257.90H814.40V260.30H812.90zM816.40 257.90H817.90V260.30H816.40zM820.90 257.90H823.90V260.30H820.90zM826.90 257.90H828.90V260.30H826.90zM830.90 257.90H832.90V260.30H830.90zM835.90 257.90H837.90V260.30H835.90zM840.90 257.90H844.90V260.30H840.90zM847.90 257.90H849.90V260.30H847.90zM853.90 257.90H855.90V260.30H853.90zM857.90 257.90H859.90V260.30H857.90zM860.50 256.00H862.00V324.00H860.50zM861.25 322.40H934.00V324.50H861.25zM862.25 324.50H864.75V327.50H862.25zM867.75 324.50H869.25V327.50H867.75zM871.25 324.50H873.75V327.50H871.25zM876.75 324.50H877.95V327.50H876.75zM880.95 324.50H882.45V327.50H880.95zM885.45 324.50H887.95V327.50H885.45zM889.95 324.50H891.15V327.50H889.95zM894.15 324.50H896.65V327.50H894.15zM898.65 324.50H899.85V327.50H898.65zM902.85 324.50H904.35V327.50H902.85zM907.35 324.50H908.55V327.50H907.35zM910.55 324.50H913.05V327.50H910.55zM915.05 324.50H916.25V327.50H915.05zM920.25 324.50H921.75V327.50H920.25zM924.75 324.50H926.25V327.50H924.75zM930.25 324.50H932.75V327.50H930.25z" fill="#f4f400"/>
<path d="M0.8 313.6H17.5L22.8 323.8L17.5 334H0.8z" fill="#000" stroke="#e8f030" stroke-width="1.4"/>
<text x="9.7" y="329.6" font-size="16.5" text-anchor="middle" fill="#e8e830" font-family="Liberation Sans">2</text>
<rect x="0" y="623" width="382" height="97" fill="#5ab6c8"/>
<rect x="382" y="645" width="575.5" height="72" fill="#0462a0"/>
<rect x="1.2" y="624.4" width="249.6" height="22.5" rx="4" fill="#000"/>
<rect x="1.2" y="648.6" width="249.6" height="22" rx="4" fill="#000"/>
<rect x="1.2" y="673" width="379.5" height="44" rx="4" fill="#000"/>
<rect x="252.6" y="623.4" width="128.2" height="47" rx="5" fill="#000"/>
<rect x="383.3" y="623.6" width="118" height="21.1" rx="10.5" fill="#000"/>
<rect x="798" y="624.3" width="153.8" height="20.7" rx="10.3" fill="#000"/>
<circle cx="12.5" cy="636.4" r="9.7" fill="#e81010" stroke="#000" stroke-opacity="0.3" stroke-width="0.8"/>
<text x="12.6" y="642.5" font-size="17.5" text-anchor="middle" fill="#000" stroke="#000" stroke-width="0.6" font-family="Liberation Sans">1</text>
<circle cx="12.5" cy="660.3" r="9.7" fill="#e0dc30" stroke="#000" stroke-opacity="0.3" stroke-width="0.8"/>
<text x="12.6" y="666.4" font-size="17.5" text-anchor="middle" fill="#000" stroke="#000" stroke-width="0.6" font-family="Liberation Sans">2</text>
<text x="20.8" y="643.6" font-size="18" letter-spacing="1.20" fill="#d01818" font-weight="normal" xml:space="preserve"  stroke="#000" stroke-width="0.3">5V-</text>
<text x="126.5" y="643.3" font-size="18" letter-spacing="1.20" fill="#d01818" font-weight="normal" xml:space="preserve"  stroke="#000" stroke-width="0.3">0.00div</text>
<text x="20.8" y="667.8" font-size="18" letter-spacing="1.20" fill="#d2d22c" font-weight="normal" xml:space="preserve"  stroke="#000" stroke-width="0.3">1V-</text>
<text x="126.5" y="667.5" font-size="18" letter-spacing="1.20" fill="#d2d22c" font-weight="normal" xml:space="preserve"  stroke="#000" stroke-width="0.3">0.00div</text>
<text x="270" y="640.5" font-size="18" letter-spacing="1.20" fill="#f0f0f0" font-weight="normal" xml:space="preserve"  stroke="#000" stroke-width="0.3">(500S/s)</text>
<text x="261.5" y="664.5" font-size="18" letter-spacing="1.20" fill="#f0f0f0" font-weight="normal" xml:space="preserve"  stroke="#000" stroke-width="0.3">Depth:10K</text>
<circle cx="12.2" cy="684.6" r="9.7" fill="#e0dc30" stroke="#000" stroke-opacity="0.3" stroke-width="0.8"/>
<text x="12.299999999999999" y="690.7" font-size="17.5" text-anchor="middle" fill="#000" stroke="#000" stroke-width="0.6" font-family="Liberation Sans">2</text>
<circle cx="12.2" cy="707" r="9.7" fill="#e0dc30" stroke="#000" stroke-opacity="0.3" stroke-width="0.8"/>
<text x="12.299999999999999" y="713.1" font-size="17.5" text-anchor="middle" fill="#000" stroke="#000" stroke-width="0.6" font-family="Liberation Sans">2</text>
<text x="24.5" y="690.3" font-size="18" letter-spacing="1.20" fill="#d2d22c" font-weight="normal" xml:space="preserve"  stroke="#000" stroke-width="0.3">F:  ?</text>
<text x="25" y="713.2" font-size="18" letter-spacing="1.20" fill="#d2d22c" font-weight="normal" xml:space="preserve"  stroke="#000" stroke-width="0.3">+D:30.2%</text>
<circle cx="201.8" cy="684.5" r="9.7" fill="#e0dc30" stroke="#000" stroke-opacity="0.3" stroke-width="0.8"/>
<text x="201.9" y="690.6" font-size="17.5" text-anchor="middle" fill="#000" stroke="#000" stroke-width="0.6" font-family="Liberation Sans">2</text>
<circle cx="201.8" cy="707.2" r="9.7" fill="#e0dc30" stroke="#000" stroke-opacity="0.3" stroke-width="0.8"/>
<text x="201.9" y="713.3000000000001" font-size="17.5" text-anchor="middle" fill="#000" stroke="#000" stroke-width="0.6" font-family="Liberation Sans">2</text>
<text x="216" y="690.3" font-size="18" letter-spacing="1.20" fill="#d2d22c" font-weight="normal" xml:space="preserve"  stroke="#000" stroke-width="0.3">Vk:1.137v</text>
<text x="216" y="713.2" font-size="18" letter-spacing="1.20" fill="#d2d22c" font-weight="normal" xml:space="preserve"  stroke="#000" stroke-width="0.3">V:883.3mv</text>
<text x="404.5" y="640.8" font-size="18" letter-spacing="1.20" fill="#f2f2f2" font-weight="normal" xml:space="preserve"  stroke="#000" stroke-width="0.3">M:1.0s</text>
<circle cx="810.6" cy="634.3" r="9.7" fill="#e81010" stroke="#000" stroke-opacity="0.3" stroke-width="0.8"/>
<text x="810.7" y="640.4" font-size="17.5" text-anchor="middle" fill="#000" stroke="#000" stroke-width="0.6" font-family="Liberation Sans">1</text>
<path d="M822.5 642.2H832L837 626.8H845.6" fill="none" stroke="#e0e0e0" stroke-width="1.5"/>
<text x="849" y="642.2" font-size="18" letter-spacing="1.20" fill="#f0f0f0" font-weight="normal" xml:space="preserve"  stroke="#000" stroke-width="0.3">0.00mV</text>
<rect x="387.2" y="649.2" width="106" height="67" rx="3" fill="#03407a"/>
<rect x="387.2" y="649.2" width="104.4" height="65" rx="3" fill="#5cb2f4"/>
<rect x="388.8" y="651.0" width="102.8" height="63.2" fill="#0880e4"/>
<rect x="716.9" y="648.8" width="106" height="68" rx="3" fill="#03407a"/>
<rect x="716.9" y="648.8" width="104.4" height="66" rx="3" fill="#5cb2f4"/>
<rect x="718.5" y="650.5999999999999" width="102.8" height="64.2" fill="#0880e4"/>
<text x="414.5" y="674.6" font-size="18" letter-spacing="1.20" fill="#061a60" font-weight="normal" xml:space="preserve" stroke="#061a60" stroke-width="0.5">Type</text>
<rect x="409" y="685" width="59.8" height="24" fill="#e4e4e4"/>
<text x="410" y="703.3" font-size="18" letter-spacing="1.20" fill="#101010" font-weight="normal" xml:space="preserve" stroke="#101010" stroke-width="0.3">Image</text>
<text x="745.2" y="688.9" font-size="18.5" letter-spacing="1.6" fill="#031c62" stroke="#031c62" stroke-width="0.5" font-family="Liberation Sans">Save</text>
</svg></body></html>
